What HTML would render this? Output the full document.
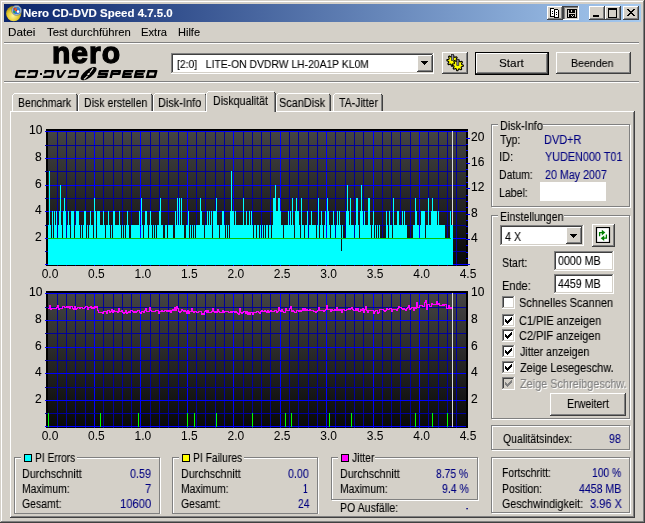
<!DOCTYPE html><html><head><meta charset="utf-8"><style>
html,body{margin:0;padding:0;}
body{width:645px;height:523px;position:relative;overflow:hidden;background:#d4d0c8;font-family:"Liberation Sans",sans-serif;font-size:11px;}
div[id^=t]{-webkit-text-stroke:0.1px currentColor;will-change:transform;}
</style></head><body>
<div style="position:absolute;left:0px;top:0px;width:645px;height:523px;background:#404040;"></div>
<div style="position:absolute;left:0px;top:0px;width:644px;height:522px;background:#d4d0c8;"></div>
<div style="position:absolute;left:1px;top:1px;width:643px;height:521px;background:#808080;"></div>
<div style="position:absolute;left:1px;top:1px;width:642px;height:520px;background:#ffffff;"></div>
<div style="position:absolute;left:2px;top:2px;width:641px;height:519px;background:#d4d0c8;"></div>
<div style="position:absolute;left:4px;top:4px;width:637px;height:18px;background:linear-gradient(to right,#0a246a,#a6caf0);"></div>
<div id="t1" style="position:absolute;left:22.96px;top:7px;line-height:13px;font-size:11px;color:#fff;font-weight:bold;white-space:nowrap;transform:scaleX(1.0423);transform-origin:0 0;">Nero CD-DVD Speed 4.7.5.0</div>
<svg style="position:absolute;left:6px;top:5px" width="16" height="17" viewBox="0 0 16 17">
<defs><radialGradient id="dg" cx="0.45" cy="0.65" r="0.65"><stop offset="0" stop-color="#fff4a0"/><stop offset="0.55" stop-color="#e6cc30"/><stop offset="1" stop-color="#9c8410"/></radialGradient></defs>
<circle cx="7.7" cy="8.6" r="7.6" fill="url(#dg)"/>
<circle cx="10.6" cy="5.4" r="4.9" fill="#b8c4d0" stroke="#707c88" stroke-width="0.8"/>
<circle cx="10.6" cy="5.4" r="3.7" fill="#2c7cd8"/>
<path d="M8 3.2 L12.5 7.5" stroke="#e02818" stroke-width="1.6"/>
<path d="M10.5 2.5 L9 6" stroke="#f07010" stroke-width="1.1"/>
<circle cx="12" cy="6.6" r="1.3" fill="#fff"/>
<circle cx="8.2" cy="7" r="1" fill="#30a030"/>
</svg>
<div style="position:absolute;left:547px;top:6px;width:16px;height:14px;background:#404040;"></div>
<div style="position:absolute;left:547px;top:6px;width:15px;height:13px;background:#ffffff;"></div>
<div style="position:absolute;left:548px;top:7px;width:14px;height:12px;background:#808080;"></div>
<div style="position:absolute;left:548px;top:7px;width:13px;height:11px;background:#d4d0c8;"></div>
<div style="position:absolute;left:563px;top:6px;width:16px;height:14px;background:#ffffff;"></div>
<div style="position:absolute;left:563px;top:6px;width:15px;height:13px;background:#404040;"></div>
<div style="position:absolute;left:564px;top:7px;width:14px;height:12px;background:#808080;"></div>
<div style="position:absolute;left:564px;top:7px;width:13px;height:11px;background:#808080;"></div>
<div style="position:absolute;left:565px;top:8px;width:13px;height:11px;background:#d4d0c8;"></div>
<div style="position:absolute;left:589px;top:6px;width:16px;height:14px;background:#404040;"></div>
<div style="position:absolute;left:589px;top:6px;width:15px;height:13px;background:#ffffff;"></div>
<div style="position:absolute;left:590px;top:7px;width:14px;height:12px;background:#808080;"></div>
<div style="position:absolute;left:590px;top:7px;width:13px;height:11px;background:#d4d0c8;"></div>
<div style="position:absolute;left:605px;top:6px;width:16px;height:14px;background:#404040;"></div>
<div style="position:absolute;left:605px;top:6px;width:15px;height:13px;background:#ffffff;"></div>
<div style="position:absolute;left:606px;top:7px;width:14px;height:12px;background:#808080;"></div>
<div style="position:absolute;left:606px;top:7px;width:13px;height:11px;background:#d4d0c8;"></div>
<div style="position:absolute;left:623px;top:6px;width:16px;height:14px;background:#404040;"></div>
<div style="position:absolute;left:623px;top:6px;width:15px;height:13px;background:#ffffff;"></div>
<div style="position:absolute;left:624px;top:7px;width:14px;height:12px;background:#808080;"></div>
<div style="position:absolute;left:624px;top:7px;width:13px;height:11px;background:#d4d0c8;"></div>
<svg style="position:absolute;left:547px;top:6px" width="16" height="14" viewBox="0 0 16 14" shape-rendering="crispEdges">
<path d="M3.5 2.5h3l1 1v7h-4z" fill="#fff" stroke="#000"/>
<path d="M7.5 3.5h3l1 1v7h-4z" fill="#fff" stroke="#000"/>
<rect x="5" y="5" width="1" height="1" fill="#000"/><rect x="5" y="7" width="1" height="1" fill="#000"/>
<rect x="9" y="6" width="1" height="1" fill="#000"/><rect x="9" y="8" width="1" height="1" fill="#000"/>
</svg>
<svg style="position:absolute;left:563px;top:6px" width="16" height="14" viewBox="0 0 16 14" shape-rendering="crispEdges">
<rect x="4" y="3" width="10" height="9" fill="#000"/>
<rect x="5" y="4" width="1" height="7" fill="#d4d0c8"/><rect x="12" y="4" width="1" height="7" fill="#d4d0c8"/>
<rect x="6" y="7" width="6" height="1" fill="#d4d0c8"/>
<rect x="8" y="4" width="1" height="2" fill="#d4d0c8"/>
<rect x="8" y="9" width="1" height="1" fill="#d4d0c8"/><rect x="9" y="10" width="1" height="1" fill="#d4d0c8"/><rect x="10" y="9" width="1" height="1" fill="#d4d0c8"/>
</svg>
<div style="position:absolute;left:593px;top:15px;width:6px;height:2px;background:#000;"></div>
<div style="position:absolute;left:608px;top:8px;width:7px;height:7px;border:1px solid #000;border-top-width:2px;"></div>
<svg style="position:absolute;left:623px;top:6px" width="16" height="14" viewBox="0 0 16 14" shape-rendering="crispEdges">
<path d="M4 3h2v1h1v1h2v-1h1v-1h2v1h-1v1h-1v1h-1v1h1v1h1v1h1v1h-2v-1h-1v-1h-2v1h-1v1h-2v-1h1v-1h1v-1h1v-1h-1v-1h-1v-1h-1z" fill="#000"/>
</svg>
<div id="t2" style="position:absolute;left:8.24px;top:26px;line-height:13px;font-size:11px;color:#000;font-weight:normal;white-space:nowrap;transform:scaleX(1.0625);transform-origin:0 0;">Datei</div>
<div id="t3" style="position:absolute;left:46.80px;top:26px;line-height:13px;font-size:11px;color:#000;font-weight:normal;white-space:nowrap;transform:scaleX(1.0235);transform-origin:0 0;">Test durchführen</div>
<div id="t4" style="position:absolute;left:140.58px;top:26px;line-height:13px;font-size:11px;color:#000;font-weight:normal;white-space:nowrap;transform:scaleX(1.0160);transform-origin:0 0;">Extra</div>
<div id="t5" style="position:absolute;left:178.00px;top:26px;line-height:13px;font-size:11px;color:#000;font-weight:normal;white-space:nowrap;transform:scaleX(1.0000);transform-origin:0 0;">Hilfe</div>
<div style="position:absolute;left:4px;top:42px;width:635px;height:1px;background:#808080;"></div>
<div style="position:absolute;left:4px;top:43px;width:635px;height:1px;background:#ffffff;"></div>
<div style="position:absolute;left:4px;top:81px;width:635px;height:1px;background:#808080;"></div>
<div style="position:absolute;left:4px;top:82px;width:635px;height:1px;background:#ffffff;"></div>
<div style="position:absolute;left:52px;top:36px;font-size:30px;line-height:33px;font-weight:bold;color:#000;-webkit-text-stroke:1.3px #000;letter-spacing:1px;">nero</div>
<svg style="position:absolute;left:0px;top:62px" width="170" height="20" viewBox="0 62 170 20">
<g fill="#000" fill-rule="evenodd">
<path transform="translate(16.5 70) skewX(-14)" d="M1.4 0H10V2.3H2.3V5.7H10V8H1.4Q0 8 0 6.6V1.4Q0 0 1.4 0Z"/><path transform="translate(28.6 70) skewX(-14)" d="M0 0H8.6Q10 0 10 1.4V6.6Q10 8 8.6 8H0V5.7H7.7V2.3H2.3V3.4H0Z"/><path transform="translate(44.8 70) skewX(-14)" d="M0 0H8.6Q10 0 10 1.4V6.6Q10 8 8.6 8H0V5.7H7.7V2.3H2.3V3.4H0Z"/><path transform="translate(56.5 70) skewX(-14)" d="M0 0H2.4L4.4 5.6H5.6L7.6 0H10L7.2 7Q6.8 8 5.8 8H4.2Q3.2 8 2.8 7Z"/><path transform="translate(69.5 70) skewX(-14)" d="M0 0H8.6Q10 0 10 1.4V6.6Q10 8 8.6 8H0V5.7H7.7V2.3H2.3V3.4H0Z"/><path transform="translate(99 70) skewX(-14)" d="M1 0H10V2.5H2.5V3H9Q10 3 10 4V7Q10 8 9 8H0V5.5H7.5V5H1Q0 5 0 4V1Q0 0 1 0Z"/><path transform="translate(111.4 70) skewX(-14)" d="M0 8V1Q0 0 1 0H9Q10 0 10 1V4Q10 5 9 5H2.5V8ZM2.5 2.5H7.5V3H2.5Z"/><path transform="translate(123.5 70) skewX(-14)" d="M1 0H10V2.5H2.5V3H9V5H2.5V5.5H10V8H1Q0 8 0 7V1Q0 0 1 0Z"/><path transform="translate(135.5 70) skewX(-14)" d="M1 0H10V2.5H2.5V3H9V5H2.5V5.5H10V8H1Q0 8 0 7V1Q0 0 1 0Z"/><path transform="translate(147.7 70) skewX(-14)" d="M0 0H9Q10 0 10 1V7Q10 8 9 8H0ZM2.5 2.5V5.5H7.5V2.5Z"/>
<rect x="40" y="73" width="2" height="2"/>
</g>
<g transform="translate(88.6 73.6) rotate(-38)"><ellipse cx="0" cy="0" rx="9.6" ry="3.9" fill="#000"/><path d="M-7.2 1.6 L-2.2 1.2 M1.6 0 L7 -1.5" stroke="#e8e4dc" stroke-width="1.1" fill="none"/><ellipse cx="-0.2" cy="0.3" rx="1.5" ry="1" fill="#e8e4dc"/></g>
</svg>
<div style="position:absolute;left:171px;top:53px;width:263px;height:21px;background:#ffffff;"></div>
<div style="position:absolute;left:171px;top:53px;width:262px;height:20px;background:#808080;"></div>
<div style="position:absolute;left:172px;top:54px;width:261px;height:19px;background:#d4d0c8;"></div>
<div style="position:absolute;left:172px;top:54px;width:260px;height:18px;background:#404040;"></div>
<div style="position:absolute;left:173px;top:55px;width:259px;height:17px;background:#fff;"></div>
<div style="position:absolute;left:417px;top:55px;width:16px;height:17px;background:#404040;"></div>
<div style="position:absolute;left:417px;top:55px;width:15px;height:16px;background:#ffffff;"></div>
<div style="position:absolute;left:418px;top:56px;width:14px;height:15px;background:#808080;"></div>
<div style="position:absolute;left:418px;top:56px;width:13px;height:14px;background:#d4d0c8;"></div>
<svg style="position:absolute;left:421px;top:61px" width="7" height="4" shape-rendering="crispEdges"><path d="M0 0h7v1h-1v1h-1v1h-1v1h-1v-1h-1v-1h-1v-1h-1z" fill="#000"/></svg>
<div id="t6" style="position:absolute;left:176.56px;top:58px;line-height:13px;font-size:11px;color:#000;font-weight:normal;white-space:nowrap;transform:scaleX(0.9416);transform-origin:0 0;">[2:0]&nbsp;&nbsp;&nbsp;LITE-ON DVDRW LH-20A1P KL0M</div>
<div style="position:absolute;left:442px;top:52px;width:26px;height:22px;background:#404040;"></div>
<div style="position:absolute;left:442px;top:52px;width:25px;height:21px;background:#ffffff;"></div>
<div style="position:absolute;left:443px;top:53px;width:24px;height:20px;background:#808080;"></div>
<div style="position:absolute;left:443px;top:53px;width:23px;height:19px;background:#d4d0c8;"></div>
<svg style="position:absolute;left:444px;top:52px" width="22" height="20" viewBox="0 0 22 20"><g fill="#ffff00" stroke="#000" stroke-width="1.1" stroke-linejoin="round"><polygon points="14.10,8.70 13.99,9.79 12.20,10.23 11.83,10.92 12.46,12.66 11.61,13.36 10.03,12.40 9.28,12.62 8.50,14.30 7.41,14.19 6.97,12.40 6.28,12.03 4.54,12.66 3.84,11.81 4.80,10.23 4.58,9.48 2.90,8.70 3.01,7.61 4.80,7.17 5.17,6.48 4.54,4.74 5.39,4.04 6.97,5.00 7.72,4.78 8.50,3.10 9.59,3.21 10.03,5.00 10.72,5.37 12.46,4.74 13.16,5.59 12.20,7.17 12.42,7.92"/><polygon points="19.40,13.20 19.29,14.29 17.50,14.73 17.13,15.42 17.76,17.16 16.91,17.86 15.33,16.90 14.58,17.12 13.80,18.80 12.71,18.69 12.27,16.90 11.58,16.53 9.84,17.16 9.14,16.31 10.10,14.73 9.88,13.98 8.20,13.20 8.31,12.11 10.10,11.67 10.47,10.98 9.84,9.24 10.69,8.54 12.27,9.50 13.02,9.28 13.80,7.60 14.89,7.71 15.33,9.50 16.02,9.87 17.76,9.24 18.46,10.09 17.50,11.67 17.72,12.42"/></g><rect x="7.5" y="2.5" width="2" height="6" fill="#9090a8" stroke="#202020" stroke-width="0.7"/><rect x="12.8" y="7.3" width="2" height="6" fill="#9090a8" stroke="#202020" stroke-width="0.7"/></svg>
<div style="position:absolute;left:475px;top:52px;width:74px;height:23px;background:#000;"></div>
<div style="position:absolute;left:476px;top:53px;width:72px;height:21px;background:#404040;"></div>
<div style="position:absolute;left:476px;top:53px;width:71px;height:20px;background:#ffffff;"></div>
<div style="position:absolute;left:477px;top:54px;width:70px;height:19px;background:#808080;"></div>
<div style="position:absolute;left:477px;top:54px;width:69px;height:18px;background:#d4d0c8;"></div>
<div id="t7" style="position:absolute;left:498.73px;top:57px;line-height:13px;font-size:11px;color:#000;font-weight:normal;white-space:nowrap;transform:scaleX(1.0682);transform-origin:0 0;">Start</div>
<div style="position:absolute;left:556px;top:52px;width:75px;height:22px;background:#404040;"></div>
<div style="position:absolute;left:556px;top:52px;width:74px;height:21px;background:#ffffff;"></div>
<div style="position:absolute;left:557px;top:53px;width:73px;height:20px;background:#808080;"></div>
<div style="position:absolute;left:557px;top:53px;width:72px;height:19px;background:#d4d0c8;"></div>
<div id="t8" style="position:absolute;left:570.64px;top:57px;line-height:13px;font-size:11px;color:#000;font-weight:normal;white-space:nowrap;transform:scaleX(0.9628);transform-origin:0 0;">Beenden</div>
<div style="position:absolute;left:10px;top:111px;width:625px;height:407px;background:#404040;"></div>
<div style="position:absolute;left:10px;top:111px;width:624px;height:406px;background:#ffffff;"></div>
<div style="position:absolute;left:11px;top:112px;width:623px;height:405px;background:#808080;"></div>
<div style="position:absolute;left:11px;top:112px;width:622px;height:404px;background:#d4d0c8;"></div>
<div style="position:absolute;left:12px;top:95px;width:1px;height:16px;background:#ffffff;"></div>
<div style="position:absolute;left:13px;top:94px;width:1px;height:1px;background:#ffffff;"></div>
<div style="position:absolute;left:14px;top:93px;width:62px;height:1px;background:#ffffff;"></div>
<div style="position:absolute;left:76px;top:94px;width:1px;height:17px;background:#808080;"></div>
<div style="position:absolute;left:77px;top:95px;width:1px;height:16px;background:#404040;"></div>
<div style="position:absolute;left:76px;top:94px;width:1px;height:1px;background:#404040;"></div>
<div id="t9" style="position:absolute;left:18.13px;top:97px;line-height:13px;font-size:12px;color:#000;font-weight:normal;white-space:nowrap;transform:scaleX(0.8733);transform-origin:0 0;">Benchmark</div>
<div style="position:absolute;left:78px;top:95px;width:1px;height:16px;background:#ffffff;"></div>
<div style="position:absolute;left:79px;top:94px;width:1px;height:1px;background:#ffffff;"></div>
<div style="position:absolute;left:80px;top:93px;width:71px;height:1px;background:#ffffff;"></div>
<div style="position:absolute;left:151px;top:94px;width:1px;height:17px;background:#808080;"></div>
<div style="position:absolute;left:152px;top:95px;width:1px;height:16px;background:#404040;"></div>
<div style="position:absolute;left:151px;top:94px;width:1px;height:1px;background:#404040;"></div>
<div id="t10" style="position:absolute;left:84.12px;top:97px;line-height:13px;font-size:12px;color:#000;font-weight:normal;white-space:nowrap;transform:scaleX(0.8800);transform-origin:0 0;">Disk erstellen</div>
<div style="position:absolute;left:153px;top:95px;width:1px;height:16px;background:#ffffff;"></div>
<div style="position:absolute;left:154px;top:94px;width:1px;height:1px;background:#ffffff;"></div>
<div style="position:absolute;left:155px;top:93px;width:50px;height:1px;background:#ffffff;"></div>
<div style="position:absolute;left:205px;top:94px;width:1px;height:17px;background:#808080;"></div>
<div style="position:absolute;left:206px;top:95px;width:1px;height:16px;background:#404040;"></div>
<div style="position:absolute;left:205px;top:94px;width:1px;height:1px;background:#404040;"></div>
<div id="t11" style="position:absolute;left:158.09px;top:97px;line-height:13px;font-size:12px;color:#000;font-weight:normal;white-space:nowrap;transform:scaleX(0.9130);transform-origin:0 0;">Disk-Info</div>
<div style="position:absolute;left:276px;top:95px;width:1px;height:16px;background:#ffffff;"></div>
<div style="position:absolute;left:277px;top:94px;width:1px;height:1px;background:#ffffff;"></div>
<div style="position:absolute;left:278px;top:93px;width:51px;height:1px;background:#ffffff;"></div>
<div style="position:absolute;left:329px;top:94px;width:1px;height:17px;background:#808080;"></div>
<div style="position:absolute;left:330px;top:95px;width:1px;height:16px;background:#404040;"></div>
<div style="position:absolute;left:329px;top:94px;width:1px;height:1px;background:#404040;"></div>
<div id="t12" style="position:absolute;left:279.09px;top:97px;line-height:13px;font-size:12px;color:#000;font-weight:normal;white-space:nowrap;transform:scaleX(0.9080);transform-origin:0 0;">ScanDisk</div>
<div style="position:absolute;left:333px;top:95px;width:1px;height:16px;background:#ffffff;"></div>
<div style="position:absolute;left:334px;top:94px;width:1px;height:1px;background:#ffffff;"></div>
<div style="position:absolute;left:335px;top:93px;width:46px;height:1px;background:#ffffff;"></div>
<div style="position:absolute;left:381px;top:94px;width:1px;height:17px;background:#808080;"></div>
<div style="position:absolute;left:382px;top:95px;width:1px;height:16px;background:#404040;"></div>
<div style="position:absolute;left:381px;top:94px;width:1px;height:1px;background:#404040;"></div>
<div id="t13" style="position:absolute;left:338.50px;top:97px;line-height:13px;font-size:12px;color:#000;font-weight:normal;white-space:nowrap;transform:scaleX(0.8750);transform-origin:0 0;">TA-Jitter</div>
<div style="position:absolute;left:206px;top:93px;width:1px;height:19px;background:#ffffff;"></div>
<div style="position:absolute;left:207px;top:92px;width:1px;height:1px;background:#ffffff;"></div>
<div style="position:absolute;left:208px;top:91px;width:66px;height:1px;background:#ffffff;"></div>
<div style="position:absolute;left:207px;top:93px;width:67px;height:20px;background:#d4d0c8;"></div>
<div style="position:absolute;left:274px;top:92px;width:1px;height:20px;background:#808080;"></div>
<div style="position:absolute;left:275px;top:93px;width:1px;height:19px;background:#404040;"></div>
<div style="position:absolute;left:274px;top:92px;width:1px;height:1px;background:#404040;"></div>
<div style="position:absolute;left:207px;top:111px;width:67px;height:1px;background:#d4d0c8;"></div>
<div id="t14" style="position:absolute;left:213.11px;top:95px;line-height:13px;font-size:12px;color:#000;font-weight:normal;white-space:nowrap;transform:scaleX(0.8852);transform-origin:0 0;">Diskqualität</div>
<svg style="position:absolute;left:0;top:0" width="645" height="523" shape-rendering="crispEdges">
<defs><linearGradient id="g131" x1="0" y1="0" x2="0" y2="1"><stop offset="0" stop-color="#444444"/><stop offset="1" stop-color="#080808"/></linearGradient></defs>
<rect x="46" y="129" width="422" height="137" fill="#000"/>
<rect x="48" y="131" width="418" height="134" fill="url(#g131)"/>
<rect x="57" y="131" width="1" height="135" fill="#00009c"/>
<rect x="66" y="131" width="1" height="135" fill="#00009c"/>
<rect x="75" y="131" width="1" height="135" fill="#00009c"/>
<rect x="85" y="131" width="1" height="135" fill="#00009c"/>
<rect x="94" y="131" width="1" height="135" fill="#0000ff"/>
<rect x="103" y="131" width="1" height="135" fill="#00009c"/>
<rect x="113" y="131" width="1" height="135" fill="#00009c"/>
<rect x="122" y="131" width="1" height="135" fill="#00009c"/>
<rect x="131" y="131" width="1" height="135" fill="#00009c"/>
<rect x="140" y="131" width="1" height="135" fill="#0000ff"/>
<rect x="150" y="131" width="1" height="135" fill="#00009c"/>
<rect x="159" y="131" width="1" height="135" fill="#00009c"/>
<rect x="168" y="131" width="1" height="135" fill="#00009c"/>
<rect x="178" y="131" width="1" height="135" fill="#00009c"/>
<rect x="187" y="131" width="1" height="135" fill="#0000ff"/>
<rect x="196" y="131" width="1" height="135" fill="#00009c"/>
<rect x="205" y="131" width="1" height="135" fill="#00009c"/>
<rect x="215" y="131" width="1" height="135" fill="#00009c"/>
<rect x="224" y="131" width="1" height="135" fill="#00009c"/>
<rect x="233" y="131" width="1" height="135" fill="#0000ff"/>
<rect x="243" y="131" width="1" height="135" fill="#00009c"/>
<rect x="252" y="131" width="1" height="135" fill="#00009c"/>
<rect x="261" y="131" width="1" height="135" fill="#00009c"/>
<rect x="270" y="131" width="1" height="135" fill="#00009c"/>
<rect x="280" y="131" width="1" height="135" fill="#0000ff"/>
<rect x="289" y="131" width="1" height="135" fill="#00009c"/>
<rect x="298" y="131" width="1" height="135" fill="#00009c"/>
<rect x="308" y="131" width="1" height="135" fill="#00009c"/>
<rect x="317" y="131" width="1" height="135" fill="#00009c"/>
<rect x="326" y="131" width="1" height="135" fill="#0000ff"/>
<rect x="335" y="131" width="1" height="135" fill="#00009c"/>
<rect x="345" y="131" width="1" height="135" fill="#00009c"/>
<rect x="354" y="131" width="1" height="135" fill="#00009c"/>
<rect x="363" y="131" width="1" height="135" fill="#00009c"/>
<rect x="373" y="131" width="1" height="135" fill="#0000ff"/>
<rect x="382" y="131" width="1" height="135" fill="#00009c"/>
<rect x="391" y="131" width="1" height="135" fill="#00009c"/>
<rect x="400" y="131" width="1" height="135" fill="#00009c"/>
<rect x="410" y="131" width="1" height="135" fill="#00009c"/>
<rect x="419" y="131" width="1" height="135" fill="#0000ff"/>
<rect x="428" y="131" width="1" height="135" fill="#00009c"/>
<rect x="438" y="131" width="1" height="135" fill="#00009c"/>
<rect x="447" y="131" width="1" height="135" fill="#00009c"/>
<rect x="456" y="131" width="1" height="135" fill="#00009c"/>
<rect x="45" y="264" width="425" height="1" fill="#0000ff"/>
<rect x="45" y="251" width="421" height="1" fill="#00009c"/>
<rect x="45" y="238" width="421" height="1" fill="#0000ff"/>
<rect x="45" y="225" width="421" height="1" fill="#00009c"/>
<rect x="45" y="211" width="421" height="1" fill="#0000ff"/>
<rect x="45" y="198" width="421" height="1" fill="#00009c"/>
<rect x="45" y="185" width="421" height="1" fill="#0000ff"/>
<rect x="45" y="171" width="421" height="1" fill="#00009c"/>
<rect x="45" y="158" width="421" height="1" fill="#0000ff"/>
<rect x="45" y="145" width="421" height="1" fill="#00009c"/>
<rect x="45" y="131" width="421" height="1" fill="#0000ff"/>
<rect x="452" y="131" width="1" height="134" fill="#d8d8d8"/>
<rect x="48" y="225" width="1" height="40" fill="#00ffff"/>
<rect x="49" y="171" width="1" height="94" fill="#00ffff"/>
<rect x="50" y="225" width="1" height="40" fill="#00ffff"/>
<rect x="51" y="239" width="1" height="26" fill="#00ffff"/>
<rect x="52" y="211" width="1" height="54" fill="#00ffff"/>
<rect x="53" y="239" width="1" height="26" fill="#00ffff"/>
<rect x="54" y="211" width="1" height="54" fill="#00ffff"/>
<rect x="55" y="225" width="1" height="40" fill="#00ffff"/>
<rect x="56" y="211" width="1" height="54" fill="#00ffff"/>
<rect x="57" y="239" width="1" height="26" fill="#00ffff"/>
<rect x="58" y="225" width="1" height="40" fill="#00ffff"/>
<rect x="59" y="211" width="1" height="54" fill="#00ffff"/>
<rect x="60" y="185" width="1" height="80" fill="#00ffff"/>
<rect x="61" y="225" width="1" height="40" fill="#00ffff"/>
<rect x="62" y="239" width="1" height="26" fill="#00ffff"/>
<rect x="63" y="211" width="1" height="54" fill="#00ffff"/>
<rect x="64" y="198" width="1" height="67" fill="#00ffff"/>
<rect x="65" y="211" width="1" height="54" fill="#00ffff"/>
<rect x="66" y="239" width="1" height="26" fill="#00ffff"/>
<rect x="67" y="225" width="1" height="40" fill="#00ffff"/>
<rect x="68" y="211" width="1" height="54" fill="#00ffff"/>
<rect x="69" y="225" width="1" height="40" fill="#00ffff"/>
<rect x="70" y="239" width="1" height="26" fill="#00ffff"/>
<rect x="71" y="211" width="3" height="54" fill="#00ffff"/>
<rect x="74" y="239" width="1" height="26" fill="#00ffff"/>
<rect x="75" y="225" width="1" height="40" fill="#00ffff"/>
<rect x="76" y="211" width="3" height="54" fill="#00ffff"/>
<rect x="79" y="225" width="1" height="40" fill="#00ffff"/>
<rect x="80" y="239" width="1" height="26" fill="#00ffff"/>
<rect x="81" y="225" width="1" height="40" fill="#00ffff"/>
<rect x="82" y="239" width="1" height="26" fill="#00ffff"/>
<rect x="83" y="225" width="1" height="40" fill="#00ffff"/>
<rect x="84" y="211" width="2" height="54" fill="#00ffff"/>
<rect x="86" y="239" width="1" height="26" fill="#00ffff"/>
<rect x="87" y="225" width="1" height="40" fill="#00ffff"/>
<rect x="88" y="239" width="1" height="26" fill="#00ffff"/>
<rect x="89" y="225" width="1" height="40" fill="#00ffff"/>
<rect x="90" y="211" width="1" height="54" fill="#00ffff"/>
<rect x="91" y="225" width="2" height="40" fill="#00ffff"/>
<rect x="93" y="239" width="1" height="26" fill="#00ffff"/>
<rect x="94" y="198" width="1" height="67" fill="#00ffff"/>
<rect x="95" y="211" width="1" height="54" fill="#00ffff"/>
<rect x="96" y="239" width="1" height="26" fill="#00ffff"/>
<rect x="97" y="211" width="3" height="54" fill="#00ffff"/>
<rect x="100" y="225" width="3" height="40" fill="#00ffff"/>
<rect x="103" y="211" width="1" height="54" fill="#00ffff"/>
<rect x="104" y="225" width="1" height="40" fill="#00ffff"/>
<rect x="105" y="239" width="1" height="26" fill="#00ffff"/>
<rect x="106" y="225" width="2" height="40" fill="#00ffff"/>
<rect x="108" y="211" width="1" height="54" fill="#00ffff"/>
<rect x="109" y="225" width="1" height="40" fill="#00ffff"/>
<rect x="110" y="239" width="1" height="26" fill="#00ffff"/>
<rect x="111" y="225" width="1" height="40" fill="#00ffff"/>
<rect x="112" y="239" width="1" height="26" fill="#00ffff"/>
<rect x="113" y="211" width="2" height="54" fill="#00ffff"/>
<rect x="115" y="225" width="4" height="40" fill="#00ffff"/>
<rect x="119" y="211" width="1" height="54" fill="#00ffff"/>
<rect x="120" y="225" width="1" height="40" fill="#00ffff"/>
<rect x="121" y="239" width="1" height="26" fill="#00ffff"/>
<rect x="122" y="225" width="1" height="40" fill="#00ffff"/>
<rect x="123" y="239" width="1" height="26" fill="#00ffff"/>
<rect x="124" y="225" width="1" height="40" fill="#00ffff"/>
<rect x="125" y="239" width="1" height="26" fill="#00ffff"/>
<rect x="126" y="225" width="1" height="40" fill="#00ffff"/>
<rect x="127" y="211" width="1" height="54" fill="#00ffff"/>
<rect x="128" y="225" width="1" height="40" fill="#00ffff"/>
<rect x="129" y="239" width="2" height="26" fill="#00ffff"/>
<rect x="131" y="225" width="8" height="40" fill="#00ffff"/>
<rect x="139" y="211" width="1" height="54" fill="#00ffff"/>
<rect x="140" y="239" width="1" height="26" fill="#00ffff"/>
<rect x="141" y="198" width="1" height="67" fill="#00ffff"/>
<rect x="142" y="225" width="1" height="40" fill="#00ffff"/>
<rect x="143" y="239" width="1" height="26" fill="#00ffff"/>
<rect x="144" y="225" width="1" height="40" fill="#00ffff"/>
<rect x="145" y="211" width="2" height="54" fill="#00ffff"/>
<rect x="147" y="225" width="1" height="40" fill="#00ffff"/>
<rect x="148" y="239" width="1" height="26" fill="#00ffff"/>
<rect x="149" y="225" width="1" height="40" fill="#00ffff"/>
<rect x="150" y="211" width="1" height="54" fill="#00ffff"/>
<rect x="151" y="225" width="1" height="40" fill="#00ffff"/>
<rect x="152" y="239" width="1" height="26" fill="#00ffff"/>
<rect x="153" y="225" width="1" height="40" fill="#00ffff"/>
<rect x="154" y="239" width="1" height="26" fill="#00ffff"/>
<rect x="155" y="225" width="1" height="40" fill="#00ffff"/>
<rect x="156" y="239" width="1" height="26" fill="#00ffff"/>
<rect x="157" y="225" width="2" height="40" fill="#00ffff"/>
<rect x="159" y="211" width="1" height="54" fill="#00ffff"/>
<rect x="160" y="198" width="1" height="67" fill="#00ffff"/>
<rect x="161" y="225" width="2" height="40" fill="#00ffff"/>
<rect x="163" y="239" width="2" height="26" fill="#00ffff"/>
<rect x="165" y="225" width="2" height="40" fill="#00ffff"/>
<rect x="167" y="239" width="1" height="26" fill="#00ffff"/>
<rect x="168" y="225" width="5" height="40" fill="#00ffff"/>
<rect x="173" y="239" width="2" height="26" fill="#00ffff"/>
<rect x="175" y="211" width="1" height="54" fill="#00ffff"/>
<rect x="176" y="225" width="1" height="40" fill="#00ffff"/>
<rect x="177" y="198" width="1" height="67" fill="#00ffff"/>
<rect x="178" y="225" width="1" height="40" fill="#00ffff"/>
<rect x="179" y="198" width="1" height="67" fill="#00ffff"/>
<rect x="180" y="225" width="1" height="40" fill="#00ffff"/>
<rect x="181" y="198" width="1" height="67" fill="#00ffff"/>
<rect x="182" y="225" width="2" height="40" fill="#00ffff"/>
<rect x="184" y="239" width="2" height="26" fill="#00ffff"/>
<rect x="186" y="225" width="2" height="40" fill="#00ffff"/>
<rect x="188" y="211" width="1" height="54" fill="#00ffff"/>
<rect x="189" y="239" width="1" height="26" fill="#00ffff"/>
<rect x="190" y="225" width="1" height="40" fill="#00ffff"/>
<rect x="191" y="239" width="1" height="26" fill="#00ffff"/>
<rect x="192" y="225" width="1" height="40" fill="#00ffff"/>
<rect x="193" y="239" width="1" height="26" fill="#00ffff"/>
<rect x="194" y="225" width="1" height="40" fill="#00ffff"/>
<rect x="195" y="239" width="1" height="26" fill="#00ffff"/>
<rect x="196" y="225" width="4" height="40" fill="#00ffff"/>
<rect x="200" y="198" width="1" height="67" fill="#00ffff"/>
<rect x="201" y="211" width="1" height="54" fill="#00ffff"/>
<rect x="202" y="225" width="2" height="40" fill="#00ffff"/>
<rect x="204" y="239" width="1" height="26" fill="#00ffff"/>
<rect x="205" y="225" width="2" height="40" fill="#00ffff"/>
<rect x="207" y="211" width="1" height="54" fill="#00ffff"/>
<rect x="208" y="225" width="1" height="40" fill="#00ffff"/>
<rect x="209" y="211" width="1" height="54" fill="#00ffff"/>
<rect x="210" y="225" width="1" height="40" fill="#00ffff"/>
<rect x="211" y="211" width="1" height="54" fill="#00ffff"/>
<rect x="212" y="239" width="1" height="26" fill="#00ffff"/>
<rect x="213" y="211" width="3" height="54" fill="#00ffff"/>
<rect x="216" y="198" width="1" height="67" fill="#00ffff"/>
<rect x="217" y="225" width="2" height="40" fill="#00ffff"/>
<rect x="219" y="239" width="1" height="26" fill="#00ffff"/>
<rect x="220" y="225" width="2" height="40" fill="#00ffff"/>
<rect x="222" y="211" width="2" height="54" fill="#00ffff"/>
<rect x="224" y="225" width="1" height="40" fill="#00ffff"/>
<rect x="225" y="239" width="1" height="26" fill="#00ffff"/>
<rect x="226" y="225" width="1" height="40" fill="#00ffff"/>
<rect x="227" y="239" width="1" height="26" fill="#00ffff"/>
<rect x="228" y="225" width="1" height="40" fill="#00ffff"/>
<rect x="229" y="239" width="1" height="26" fill="#00ffff"/>
<rect x="230" y="211" width="1" height="54" fill="#00ffff"/>
<rect x="231" y="171" width="1" height="94" fill="#00ffff"/>
<rect x="232" y="211" width="2" height="54" fill="#00ffff"/>
<rect x="234" y="225" width="1" height="40" fill="#00ffff"/>
<rect x="235" y="211" width="1" height="54" fill="#00ffff"/>
<rect x="236" y="225" width="7" height="40" fill="#00ffff"/>
<rect x="243" y="198" width="1" height="67" fill="#00ffff"/>
<rect x="244" y="225" width="2" height="40" fill="#00ffff"/>
<rect x="246" y="211" width="1" height="54" fill="#00ffff"/>
<rect x="247" y="225" width="2" height="40" fill="#00ffff"/>
<rect x="249" y="211" width="1" height="54" fill="#00ffff"/>
<rect x="250" y="225" width="1" height="40" fill="#00ffff"/>
<rect x="251" y="211" width="1" height="54" fill="#00ffff"/>
<rect x="252" y="225" width="1" height="40" fill="#00ffff"/>
<rect x="253" y="239" width="1" height="26" fill="#00ffff"/>
<rect x="254" y="225" width="2" height="40" fill="#00ffff"/>
<rect x="256" y="239" width="1" height="26" fill="#00ffff"/>
<rect x="257" y="225" width="2" height="40" fill="#00ffff"/>
<rect x="259" y="239" width="1" height="26" fill="#00ffff"/>
<rect x="260" y="225" width="1" height="40" fill="#00ffff"/>
<rect x="261" y="239" width="1" height="26" fill="#00ffff"/>
<rect x="262" y="225" width="1" height="40" fill="#00ffff"/>
<rect x="263" y="239" width="1" height="26" fill="#00ffff"/>
<rect x="264" y="225" width="1" height="40" fill="#00ffff"/>
<rect x="265" y="239" width="1" height="26" fill="#00ffff"/>
<rect x="266" y="225" width="2" height="40" fill="#00ffff"/>
<rect x="268" y="239" width="1" height="26" fill="#00ffff"/>
<rect x="269" y="225" width="2" height="40" fill="#00ffff"/>
<rect x="271" y="239" width="1" height="26" fill="#00ffff"/>
<rect x="272" y="225" width="1" height="40" fill="#00ffff"/>
<rect x="273" y="198" width="2" height="67" fill="#00ffff"/>
<rect x="275" y="185" width="1" height="80" fill="#00ffff"/>
<rect x="276" y="211" width="2" height="54" fill="#00ffff"/>
<rect x="278" y="198" width="2" height="67" fill="#00ffff"/>
<rect x="280" y="211" width="1" height="54" fill="#00ffff"/>
<rect x="281" y="225" width="2" height="40" fill="#00ffff"/>
<rect x="283" y="239" width="1" height="26" fill="#00ffff"/>
<rect x="284" y="225" width="4" height="40" fill="#00ffff"/>
<rect x="288" y="211" width="1" height="54" fill="#00ffff"/>
<rect x="289" y="225" width="1" height="40" fill="#00ffff"/>
<rect x="290" y="211" width="1" height="54" fill="#00ffff"/>
<rect x="291" y="225" width="1" height="40" fill="#00ffff"/>
<rect x="292" y="198" width="1" height="67" fill="#00ffff"/>
<rect x="293" y="225" width="1" height="40" fill="#00ffff"/>
<rect x="294" y="239" width="1" height="26" fill="#00ffff"/>
<rect x="295" y="211" width="1" height="54" fill="#00ffff"/>
<rect x="296" y="198" width="1" height="67" fill="#00ffff"/>
<rect x="297" y="211" width="2" height="54" fill="#00ffff"/>
<rect x="299" y="225" width="1" height="40" fill="#00ffff"/>
<rect x="300" y="239" width="1" height="26" fill="#00ffff"/>
<rect x="301" y="198" width="1" height="67" fill="#00ffff"/>
<rect x="302" y="225" width="2" height="40" fill="#00ffff"/>
<rect x="304" y="239" width="1" height="26" fill="#00ffff"/>
<rect x="305" y="225" width="2" height="40" fill="#00ffff"/>
<rect x="307" y="211" width="1" height="54" fill="#00ffff"/>
<rect x="308" y="239" width="1" height="26" fill="#00ffff"/>
<rect x="309" y="225" width="2" height="40" fill="#00ffff"/>
<rect x="311" y="211" width="1" height="54" fill="#00ffff"/>
<rect x="312" y="225" width="4" height="40" fill="#00ffff"/>
<rect x="316" y="239" width="1" height="26" fill="#00ffff"/>
<rect x="317" y="225" width="1" height="40" fill="#00ffff"/>
<rect x="318" y="198" width="1" height="67" fill="#00ffff"/>
<rect x="319" y="239" width="1" height="26" fill="#00ffff"/>
<rect x="320" y="225" width="1" height="40" fill="#00ffff"/>
<rect x="321" y="211" width="1" height="54" fill="#00ffff"/>
<rect x="322" y="225" width="1" height="40" fill="#00ffff"/>
<rect x="323" y="239" width="1" height="26" fill="#00ffff"/>
<rect x="324" y="225" width="1" height="40" fill="#00ffff"/>
<rect x="325" y="211" width="1" height="54" fill="#00ffff"/>
<rect x="326" y="239" width="1" height="26" fill="#00ffff"/>
<rect x="327" y="198" width="1" height="67" fill="#00ffff"/>
<rect x="328" y="211" width="1" height="54" fill="#00ffff"/>
<rect x="329" y="225" width="1" height="40" fill="#00ffff"/>
<rect x="330" y="239" width="1" height="26" fill="#00ffff"/>
<rect x="331" y="225" width="2" height="40" fill="#00ffff"/>
<rect x="333" y="211" width="1" height="54" fill="#00ffff"/>
<rect x="334" y="225" width="1" height="40" fill="#00ffff"/>
<rect x="335" y="239" width="1" height="26" fill="#00ffff"/>
<rect x="336" y="225" width="1" height="40" fill="#00ffff"/>
<rect x="337" y="211" width="1" height="54" fill="#00ffff"/>
<rect x="338" y="225" width="1" height="40" fill="#00ffff"/>
<rect x="339" y="211" width="1" height="54" fill="#00ffff"/>
<rect x="340" y="225" width="1" height="40" fill="#00ffff"/>
<rect x="341" y="251" width="1" height="14" fill="#00ffff"/>
<rect x="342" y="225" width="1" height="40" fill="#00ffff"/>
<rect x="343" y="239" width="3" height="26" fill="#00ffff"/>
<rect x="346" y="211" width="1" height="54" fill="#00ffff"/>
<rect x="347" y="185" width="1" height="80" fill="#00ffff"/>
<rect x="348" y="211" width="1" height="54" fill="#00ffff"/>
<rect x="349" y="225" width="1" height="40" fill="#00ffff"/>
<rect x="350" y="198" width="1" height="67" fill="#00ffff"/>
<rect x="351" y="225" width="3" height="40" fill="#00ffff"/>
<rect x="354" y="239" width="1" height="26" fill="#00ffff"/>
<rect x="355" y="225" width="1" height="40" fill="#00ffff"/>
<rect x="356" y="198" width="2" height="67" fill="#00ffff"/>
<rect x="358" y="225" width="1" height="40" fill="#00ffff"/>
<rect x="359" y="239" width="1" height="26" fill="#00ffff"/>
<rect x="360" y="211" width="1" height="54" fill="#00ffff"/>
<rect x="361" y="185" width="1" height="80" fill="#00ffff"/>
<rect x="362" y="211" width="1" height="54" fill="#00ffff"/>
<rect x="363" y="225" width="1" height="40" fill="#00ffff"/>
<rect x="364" y="211" width="1" height="54" fill="#00ffff"/>
<rect x="365" y="225" width="3" height="40" fill="#00ffff"/>
<rect x="368" y="198" width="2" height="67" fill="#00ffff"/>
<rect x="370" y="225" width="1" height="40" fill="#00ffff"/>
<rect x="371" y="239" width="1" height="26" fill="#00ffff"/>
<rect x="372" y="225" width="1" height="40" fill="#00ffff"/>
<rect x="373" y="211" width="1" height="54" fill="#00ffff"/>
<rect x="374" y="239" width="1" height="26" fill="#00ffff"/>
<rect x="375" y="225" width="1" height="40" fill="#00ffff"/>
<rect x="376" y="239" width="1" height="26" fill="#00ffff"/>
<rect x="377" y="225" width="1" height="40" fill="#00ffff"/>
<rect x="378" y="239" width="1" height="26" fill="#00ffff"/>
<rect x="379" y="225" width="1" height="40" fill="#00ffff"/>
<rect x="380" y="239" width="6" height="26" fill="#00ffff"/>
<rect x="386" y="211" width="1" height="54" fill="#00ffff"/>
<rect x="387" y="225" width="1" height="40" fill="#00ffff"/>
<rect x="388" y="239" width="1" height="26" fill="#00ffff"/>
<rect x="389" y="211" width="1" height="54" fill="#00ffff"/>
<rect x="390" y="225" width="2" height="40" fill="#00ffff"/>
<rect x="392" y="239" width="1" height="26" fill="#00ffff"/>
<rect x="393" y="198" width="1" height="67" fill="#00ffff"/>
<rect x="394" y="225" width="3" height="40" fill="#00ffff"/>
<rect x="397" y="211" width="2" height="54" fill="#00ffff"/>
<rect x="399" y="225" width="3" height="40" fill="#00ffff"/>
<rect x="402" y="211" width="1" height="54" fill="#00ffff"/>
<rect x="403" y="225" width="1" height="40" fill="#00ffff"/>
<rect x="404" y="211" width="1" height="54" fill="#00ffff"/>
<rect x="405" y="225" width="2" height="40" fill="#00ffff"/>
<rect x="407" y="239" width="6" height="26" fill="#00ffff"/>
<rect x="413" y="225" width="2" height="40" fill="#00ffff"/>
<rect x="415" y="198" width="1" height="67" fill="#00ffff"/>
<rect x="416" y="211" width="1" height="54" fill="#00ffff"/>
<rect x="417" y="225" width="2" height="40" fill="#00ffff"/>
<rect x="419" y="239" width="1" height="26" fill="#00ffff"/>
<rect x="420" y="225" width="1" height="40" fill="#00ffff"/>
<rect x="421" y="211" width="4" height="54" fill="#00ffff"/>
<rect x="425" y="239" width="1" height="26" fill="#00ffff"/>
<rect x="426" y="225" width="2" height="40" fill="#00ffff"/>
<rect x="428" y="198" width="1" height="67" fill="#00ffff"/>
<rect x="429" y="225" width="2" height="40" fill="#00ffff"/>
<rect x="431" y="211" width="1" height="54" fill="#00ffff"/>
<rect x="432" y="198" width="1" height="67" fill="#00ffff"/>
<rect x="433" y="211" width="4" height="54" fill="#00ffff"/>
<rect x="437" y="225" width="1" height="40" fill="#00ffff"/>
<rect x="438" y="211" width="1" height="54" fill="#00ffff"/>
<rect x="439" y="225" width="6" height="40" fill="#00ffff"/>
<rect x="445" y="239" width="5" height="26" fill="#00ffff"/>
<rect x="450" y="211" width="1" height="54" fill="#00ffff"/>
<rect x="451" y="225" width="2" height="40" fill="#00ffff"/>
<rect x="48" y="238" width="403" height="1" fill="#00c800"/>
<rect x="466" y="264" width="4" height="1" fill="#0000ff"/>
<rect x="466" y="258" width="2" height="1" fill="#0000ff"/>
<rect x="466" y="252" width="2" height="1" fill="#0000ff"/>
<rect x="466" y="245" width="2" height="1" fill="#0000ff"/>
<rect x="466" y="239" width="4" height="1" fill="#0000ff"/>
<rect x="466" y="233" width="2" height="1" fill="#0000ff"/>
<rect x="466" y="226" width="2" height="1" fill="#0000ff"/>
<rect x="466" y="220" width="2" height="1" fill="#0000ff"/>
<rect x="466" y="214" width="4" height="1" fill="#0000ff"/>
<rect x="466" y="207" width="2" height="1" fill="#0000ff"/>
<rect x="466" y="201" width="2" height="1" fill="#0000ff"/>
<rect x="466" y="195" width="2" height="1" fill="#0000ff"/>
<rect x="466" y="188" width="4" height="1" fill="#0000ff"/>
<rect x="466" y="182" width="2" height="1" fill="#0000ff"/>
<rect x="466" y="176" width="2" height="1" fill="#0000ff"/>
<rect x="466" y="169" width="2" height="1" fill="#0000ff"/>
<rect x="466" y="163" width="4" height="1" fill="#0000ff"/>
<rect x="466" y="157" width="2" height="1" fill="#0000ff"/>
<rect x="466" y="150" width="2" height="1" fill="#0000ff"/>
<rect x="466" y="144" width="2" height="1" fill="#0000ff"/>
<rect x="466" y="138" width="4" height="1" fill="#0000ff"/>
<rect x="466" y="131" width="2" height="1" fill="#0000ff"/>
</svg>
<svg style="position:absolute;left:0;top:0" width="645" height="523" shape-rendering="crispEdges">
<defs><linearGradient id="g293" x1="0" y1="0" x2="0" y2="1"><stop offset="0" stop-color="#444444"/><stop offset="1" stop-color="#080808"/></linearGradient></defs>
<rect x="46" y="291" width="422" height="137" fill="#000"/>
<rect x="48" y="293" width="418" height="134" fill="url(#g293)"/>
<rect x="57" y="293" width="1" height="135" fill="#00009c"/>
<rect x="66" y="293" width="1" height="135" fill="#00009c"/>
<rect x="75" y="293" width="1" height="135" fill="#00009c"/>
<rect x="85" y="293" width="1" height="135" fill="#00009c"/>
<rect x="94" y="293" width="1" height="135" fill="#0000ff"/>
<rect x="103" y="293" width="1" height="135" fill="#00009c"/>
<rect x="113" y="293" width="1" height="135" fill="#00009c"/>
<rect x="122" y="293" width="1" height="135" fill="#00009c"/>
<rect x="131" y="293" width="1" height="135" fill="#00009c"/>
<rect x="140" y="293" width="1" height="135" fill="#0000ff"/>
<rect x="150" y="293" width="1" height="135" fill="#00009c"/>
<rect x="159" y="293" width="1" height="135" fill="#00009c"/>
<rect x="168" y="293" width="1" height="135" fill="#00009c"/>
<rect x="178" y="293" width="1" height="135" fill="#00009c"/>
<rect x="187" y="293" width="1" height="135" fill="#0000ff"/>
<rect x="196" y="293" width="1" height="135" fill="#00009c"/>
<rect x="205" y="293" width="1" height="135" fill="#00009c"/>
<rect x="215" y="293" width="1" height="135" fill="#00009c"/>
<rect x="224" y="293" width="1" height="135" fill="#00009c"/>
<rect x="233" y="293" width="1" height="135" fill="#0000ff"/>
<rect x="243" y="293" width="1" height="135" fill="#00009c"/>
<rect x="252" y="293" width="1" height="135" fill="#00009c"/>
<rect x="261" y="293" width="1" height="135" fill="#00009c"/>
<rect x="270" y="293" width="1" height="135" fill="#00009c"/>
<rect x="280" y="293" width="1" height="135" fill="#0000ff"/>
<rect x="289" y="293" width="1" height="135" fill="#00009c"/>
<rect x="298" y="293" width="1" height="135" fill="#00009c"/>
<rect x="308" y="293" width="1" height="135" fill="#00009c"/>
<rect x="317" y="293" width="1" height="135" fill="#00009c"/>
<rect x="326" y="293" width="1" height="135" fill="#0000ff"/>
<rect x="335" y="293" width="1" height="135" fill="#00009c"/>
<rect x="345" y="293" width="1" height="135" fill="#00009c"/>
<rect x="354" y="293" width="1" height="135" fill="#00009c"/>
<rect x="363" y="293" width="1" height="135" fill="#00009c"/>
<rect x="373" y="293" width="1" height="135" fill="#0000ff"/>
<rect x="382" y="293" width="1" height="135" fill="#00009c"/>
<rect x="391" y="293" width="1" height="135" fill="#00009c"/>
<rect x="400" y="293" width="1" height="135" fill="#00009c"/>
<rect x="410" y="293" width="1" height="135" fill="#00009c"/>
<rect x="419" y="293" width="1" height="135" fill="#0000ff"/>
<rect x="428" y="293" width="1" height="135" fill="#00009c"/>
<rect x="438" y="293" width="1" height="135" fill="#00009c"/>
<rect x="447" y="293" width="1" height="135" fill="#00009c"/>
<rect x="456" y="293" width="1" height="135" fill="#00009c"/>
<rect x="45" y="426" width="421" height="1" fill="#0000ff"/>
<rect x="45" y="413" width="421" height="1" fill="#00009c"/>
<rect x="45" y="400" width="421" height="1" fill="#0000ff"/>
<rect x="45" y="387" width="421" height="1" fill="#00009c"/>
<rect x="45" y="373" width="421" height="1" fill="#0000ff"/>
<rect x="45" y="360" width="421" height="1" fill="#00009c"/>
<rect x="45" y="347" width="421" height="1" fill="#0000ff"/>
<rect x="45" y="333" width="421" height="1" fill="#00009c"/>
<rect x="45" y="320" width="421" height="1" fill="#0000ff"/>
<rect x="45" y="307" width="421" height="1" fill="#00009c"/>
<rect x="45" y="293" width="421" height="1" fill="#0000ff"/>
<rect x="452" y="293" width="1" height="134" fill="#d8d8d8"/>
<rect x="48" y="413" width="1" height="14" fill="#00ff00"/>
<rect x="100" y="413" width="1" height="14" fill="#00ff00"/>
<rect x="138" y="413" width="1" height="14" fill="#00ff00"/>
<rect x="187" y="413" width="1" height="14" fill="#00ff00"/>
<rect x="194" y="413" width="1" height="14" fill="#00ff00"/>
<rect x="216" y="413" width="1" height="14" fill="#00ff00"/>
<rect x="252" y="413" width="1" height="14" fill="#00ff00"/>
<rect x="285" y="413" width="1" height="14" fill="#00ff00"/>
<rect x="291" y="413" width="1" height="14" fill="#00ff00"/>
<rect x="329" y="413" width="1" height="14" fill="#00ff00"/>
<rect x="351" y="413" width="1" height="14" fill="#00ff00"/>
<rect x="415" y="413" width="1" height="14" fill="#00ff00"/>
<rect x="432" y="413" width="1" height="14" fill="#00ff00"/>
<rect x="447" y="413" width="1" height="14" fill="#00ff00"/>
</svg>
<svg style="position:absolute;left:0;top:0" width="645" height="523" shape-rendering="crispEdges"><g fill="#ff00ff"><rect x="48" y="308" width="1" height="1"/><rect x="49" y="305" width="1" height="4"/><rect x="50" y="305" width="1" height="5"/><rect x="51" y="308" width="1" height="2"/><rect x="52" y="308" width="1" height="1"/><rect x="53" y="308" width="1" height="1"/><rect x="54" y="308" width="1" height="1"/><rect x="55" y="308" width="1" height="1"/><rect x="56" y="307" width="1" height="2"/><rect x="57" y="305" width="1" height="3"/><rect x="58" y="305" width="1" height="5"/><rect x="59" y="308" width="1" height="2"/><rect x="60" y="308" width="1" height="1"/><rect x="61" y="308" width="1" height="1"/><rect x="62" y="306" width="1" height="3"/><rect x="63" y="306" width="1" height="1"/><rect x="64" y="306" width="1" height="2"/><rect x="65" y="307" width="1" height="1"/><rect x="66" y="306" width="1" height="2"/><rect x="67" y="306" width="1" height="2"/><rect x="68" y="306" width="1" height="2"/><rect x="69" y="306" width="1" height="3"/><rect x="70" y="306" width="1" height="3"/><rect x="71" y="306" width="1" height="1"/><rect x="72" y="306" width="1" height="3"/><rect x="73" y="308" width="1" height="2"/><rect x="74" y="306" width="1" height="4"/><rect x="75" y="306" width="1" height="4"/><rect x="76" y="308" width="1" height="2"/><rect x="77" y="307" width="1" height="2"/><rect x="78" y="307" width="1" height="1"/><rect x="79" y="307" width="1" height="2"/><rect x="80" y="307" width="1" height="2"/><rect x="81" y="307" width="1" height="1"/><rect x="82" y="307" width="1" height="2"/><rect x="83" y="308" width="1" height="1"/><rect x="84" y="307" width="1" height="2"/><rect x="85" y="306" width="1" height="2"/><rect x="86" y="306" width="1" height="1"/><rect x="87" y="306" width="1" height="4"/><rect x="88" y="307" width="1" height="3"/><rect x="89" y="307" width="1" height="1"/><rect x="90" y="306" width="1" height="2"/><rect x="91" y="306" width="1" height="3"/><rect x="92" y="307" width="1" height="2"/><rect x="93" y="307" width="1" height="2"/><rect x="94" y="306" width="1" height="3"/><rect x="95" y="306" width="1" height="2"/><rect x="96" y="306" width="1" height="2"/><rect x="97" y="306" width="1" height="5"/><rect x="98" y="310" width="1" height="3"/><rect x="99" y="312" width="1" height="1"/><rect x="100" y="312" width="1" height="1"/><rect x="101" y="312" width="1" height="1"/><rect x="102" y="312" width="1" height="2"/><rect x="103" y="311" width="1" height="3"/><rect x="104" y="311" width="1" height="1"/><rect x="105" y="311" width="1" height="1"/><rect x="106" y="311" width="1" height="3"/><rect x="107" y="310" width="1" height="4"/><rect x="108" y="310" width="1" height="1"/><rect x="109" y="310" width="1" height="3"/><rect x="110" y="311" width="1" height="2"/><rect x="111" y="309" width="1" height="3"/><rect x="112" y="309" width="1" height="4"/><rect x="113" y="310" width="1" height="3"/><rect x="114" y="310" width="1" height="2"/><rect x="115" y="311" width="1" height="1"/><rect x="116" y="311" width="1" height="1"/><rect x="117" y="311" width="1" height="2"/><rect x="118" y="308" width="1" height="5"/><rect x="119" y="308" width="1" height="4"/><rect x="120" y="311" width="1" height="1"/><rect x="121" y="310" width="1" height="2"/><rect x="122" y="310" width="1" height="3"/><rect x="123" y="312" width="1" height="2"/><rect x="124" y="312" width="1" height="2"/><rect x="125" y="310" width="1" height="3"/><rect x="126" y="310" width="1" height="4"/><rect x="127" y="312" width="1" height="2"/><rect x="128" y="311" width="1" height="2"/><rect x="129" y="311" width="1" height="2"/><rect x="130" y="310" width="1" height="3"/><rect x="131" y="310" width="1" height="1"/><rect x="132" y="310" width="1" height="2"/><rect x="133" y="311" width="1" height="2"/><rect x="134" y="311" width="1" height="2"/><rect x="135" y="311" width="1" height="2"/><rect x="136" y="311" width="1" height="2"/><rect x="137" y="310" width="1" height="2"/><rect x="138" y="310" width="1" height="1"/><rect x="139" y="310" width="1" height="3"/><rect x="140" y="312" width="1" height="2"/><rect x="141" y="311" width="1" height="3"/><rect x="142" y="311" width="1" height="1"/><rect x="143" y="311" width="1" height="2"/><rect x="144" y="310" width="1" height="3"/><rect x="145" y="308" width="1" height="3"/><rect x="146" y="308" width="1" height="4"/><rect x="147" y="311" width="1" height="1"/><rect x="148" y="311" width="1" height="1"/><rect x="149" y="307" width="1" height="5"/><rect x="150" y="307" width="1" height="4"/><rect x="151" y="310" width="1" height="2"/><rect x="152" y="311" width="1" height="1"/><rect x="153" y="311" width="1" height="1"/><rect x="154" y="311" width="1" height="1"/><rect x="155" y="310" width="1" height="2"/><rect x="156" y="310" width="1" height="1"/><rect x="157" y="310" width="1" height="1"/><rect x="158" y="310" width="1" height="4"/><rect x="159" y="311" width="1" height="3"/><rect x="160" y="311" width="1" height="1"/><rect x="161" y="310" width="1" height="2"/><rect x="162" y="310" width="1" height="2"/><rect x="163" y="311" width="1" height="1"/><rect x="164" y="310" width="1" height="2"/><rect x="165" y="310" width="1" height="1"/><rect x="166" y="310" width="1" height="2"/><rect x="167" y="310" width="1" height="2"/><rect x="168" y="310" width="1" height="2"/><rect x="169" y="310" width="1" height="2"/><rect x="170" y="310" width="1" height="3"/><rect x="171" y="310" width="1" height="3"/><rect x="172" y="309" width="1" height="2"/><rect x="173" y="309" width="1" height="2"/><rect x="174" y="307" width="1" height="4"/><rect x="175" y="307" width="1" height="4"/><rect x="176" y="306" width="1" height="5"/><rect x="177" y="306" width="1" height="3"/><rect x="178" y="308" width="1" height="4"/><rect x="179" y="311" width="1" height="2"/><rect x="180" y="311" width="1" height="2"/><rect x="181" y="309" width="1" height="3"/><rect x="182" y="309" width="1" height="2"/><rect x="183" y="310" width="1" height="2"/><rect x="184" y="310" width="1" height="2"/><rect x="185" y="310" width="1" height="2"/><rect x="186" y="311" width="1" height="3"/><rect x="187" y="310" width="1" height="4"/><rect x="188" y="310" width="1" height="4"/><rect x="189" y="311" width="1" height="3"/><rect x="190" y="311" width="1" height="1"/><rect x="191" y="308" width="1" height="4"/><rect x="192" y="308" width="1" height="4"/><rect x="193" y="311" width="1" height="2"/><rect x="194" y="311" width="1" height="2"/><rect x="195" y="311" width="1" height="1"/><rect x="196" y="311" width="1" height="2"/><rect x="197" y="312" width="1" height="1"/><rect x="198" y="311" width="1" height="2"/><rect x="199" y="311" width="1" height="1"/><rect x="200" y="311" width="1" height="1"/><rect x="201" y="311" width="1" height="4"/><rect x="202" y="313" width="1" height="2"/><rect x="203" y="313" width="1" height="2"/><rect x="204" y="311" width="1" height="4"/><rect x="205" y="310" width="1" height="2"/><rect x="206" y="310" width="1" height="3"/><rect x="207" y="310" width="1" height="3"/><rect x="208" y="310" width="1" height="3"/><rect x="209" y="312" width="1" height="1"/><rect x="210" y="312" width="1" height="1"/><rect x="211" y="311" width="1" height="2"/><rect x="212" y="308" width="1" height="4"/><rect x="213" y="308" width="1" height="4"/><rect x="214" y="311" width="1" height="2"/><rect x="215" y="311" width="1" height="2"/><rect x="216" y="311" width="1" height="2"/><rect x="217" y="309" width="1" height="4"/><rect x="218" y="309" width="1" height="3"/><rect x="219" y="311" width="1" height="2"/><rect x="220" y="312" width="1" height="1"/><rect x="221" y="312" width="1" height="1"/><rect x="222" y="310" width="1" height="3"/><rect x="223" y="310" width="1" height="3"/><rect x="224" y="311" width="1" height="2"/><rect x="225" y="311" width="1" height="1"/><rect x="226" y="311" width="1" height="1"/><rect x="227" y="311" width="1" height="1"/><rect x="228" y="311" width="1" height="2"/><rect x="229" y="312" width="1" height="1"/><rect x="230" y="311" width="1" height="2"/><rect x="231" y="311" width="1" height="2"/><rect x="232" y="311" width="1" height="2"/><rect x="233" y="311" width="1" height="1"/><rect x="234" y="311" width="1" height="2"/><rect x="235" y="311" width="1" height="2"/><rect x="236" y="311" width="1" height="2"/><rect x="237" y="312" width="1" height="2"/><rect x="238" y="313" width="1" height="2"/><rect x="239" y="308" width="1" height="7"/><rect x="240" y="308" width="1" height="5"/><rect x="241" y="312" width="1" height="2"/><rect x="242" y="312" width="1" height="2"/><rect x="243" y="311" width="1" height="2"/><rect x="244" y="311" width="1" height="1"/><rect x="245" y="311" width="1" height="3"/><rect x="246" y="311" width="1" height="3"/><rect x="247" y="311" width="1" height="4"/><rect x="248" y="312" width="1" height="3"/><rect x="249" y="312" width="1" height="3"/><rect x="250" y="312" width="1" height="3"/><rect x="251" y="312" width="1" height="1"/><rect x="252" y="312" width="1" height="3"/><rect x="253" y="312" width="1" height="3"/><rect x="254" y="312" width="1" height="1"/><rect x="255" y="312" width="1" height="1"/><rect x="256" y="311" width="1" height="2"/><rect x="257" y="311" width="1" height="1"/><rect x="258" y="311" width="1" height="2"/><rect x="259" y="312" width="1" height="2"/><rect x="260" y="311" width="1" height="3"/><rect x="261" y="310" width="1" height="2"/><rect x="262" y="310" width="1" height="2"/><rect x="263" y="311" width="1" height="1"/><rect x="264" y="310" width="1" height="2"/><rect x="265" y="310" width="1" height="2"/><rect x="266" y="311" width="1" height="2"/><rect x="267" y="310" width="1" height="3"/><rect x="268" y="310" width="1" height="3"/><rect x="269" y="311" width="1" height="2"/><rect x="270" y="310" width="1" height="2"/><rect x="271" y="310" width="1" height="2"/><rect x="272" y="311" width="1" height="1"/><rect x="273" y="311" width="1" height="1"/><rect x="274" y="310" width="1" height="2"/><rect x="275" y="310" width="1" height="1"/><rect x="276" y="310" width="1" height="3"/><rect x="277" y="311" width="1" height="2"/><rect x="278" y="307" width="1" height="5"/><rect x="279" y="307" width="1" height="4"/><rect x="280" y="310" width="1" height="2"/><rect x="281" y="309" width="1" height="3"/><rect x="282" y="309" width="1" height="3"/><rect x="283" y="311" width="1" height="2"/><rect x="284" y="312" width="1" height="1"/><rect x="285" y="308" width="1" height="5"/><rect x="286" y="308" width="1" height="3"/><rect x="287" y="310" width="1" height="1"/><rect x="288" y="310" width="1" height="1"/><rect x="289" y="308" width="1" height="3"/><rect x="290" y="306" width="1" height="3"/><rect x="291" y="306" width="1" height="6"/><rect x="292" y="310" width="1" height="2"/><rect x="293" y="310" width="1" height="2"/><rect x="294" y="311" width="1" height="2"/><rect x="295" y="312" width="1" height="1"/><rect x="296" y="310" width="1" height="3"/><rect x="297" y="310" width="1" height="1"/><rect x="298" y="310" width="1" height="2"/><rect x="299" y="310" width="1" height="2"/><rect x="300" y="310" width="1" height="2"/><rect x="301" y="310" width="1" height="2"/><rect x="302" y="308" width="1" height="3"/><rect x="303" y="308" width="1" height="3"/><rect x="304" y="308" width="1" height="3"/><rect x="305" y="308" width="1" height="3"/><rect x="306" y="309" width="1" height="2"/><rect x="307" y="309" width="1" height="2"/><rect x="308" y="310" width="1" height="1"/><rect x="309" y="309" width="1" height="2"/><rect x="310" y="309" width="1" height="2"/><rect x="311" y="310" width="1" height="1"/><rect x="312" y="310" width="1" height="1"/><rect x="313" y="310" width="1" height="2"/><rect x="314" y="311" width="1" height="1"/><rect x="315" y="311" width="1" height="2"/><rect x="316" y="311" width="1" height="2"/><rect x="317" y="310" width="1" height="2"/><rect x="318" y="307" width="1" height="4"/><rect x="319" y="307" width="1" height="4"/><rect x="320" y="310" width="1" height="1"/><rect x="321" y="310" width="1" height="1"/><rect x="322" y="310" width="1" height="1"/><rect x="323" y="310" width="1" height="2"/><rect x="324" y="310" width="1" height="2"/><rect x="325" y="309" width="1" height="2"/><rect x="326" y="305" width="1" height="5"/><rect x="327" y="305" width="1" height="5"/><rect x="328" y="309" width="1" height="1"/><rect x="329" y="309" width="1" height="1"/><rect x="330" y="309" width="1" height="3"/><rect x="331" y="309" width="1" height="3"/><rect x="332" y="309" width="1" height="2"/><rect x="333" y="310" width="1" height="1"/><rect x="334" y="309" width="1" height="2"/><rect x="335" y="309" width="1" height="2"/><rect x="336" y="307" width="1" height="4"/><rect x="337" y="307" width="1" height="4"/><rect x="338" y="309" width="1" height="2"/><rect x="339" y="309" width="1" height="2"/><rect x="340" y="309" width="1" height="2"/><rect x="341" y="309" width="1" height="4"/><rect x="342" y="309" width="1" height="4"/><rect x="343" y="309" width="1" height="1"/><rect x="344" y="309" width="1" height="2"/><rect x="345" y="310" width="1" height="1"/><rect x="346" y="309" width="1" height="2"/><rect x="347" y="309" width="1" height="1"/><rect x="348" y="308" width="1" height="2"/><rect x="349" y="308" width="1" height="2"/><rect x="350" y="308" width="1" height="2"/><rect x="351" y="307" width="1" height="2"/><rect x="352" y="307" width="1" height="3"/><rect x="353" y="309" width="1" height="2"/><rect x="354" y="310" width="1" height="1"/><rect x="355" y="308" width="1" height="3"/><rect x="356" y="308" width="1" height="3"/><rect x="357" y="308" width="1" height="3"/><rect x="358" y="308" width="1" height="4"/><rect x="359" y="311" width="1" height="1"/><rect x="360" y="309" width="1" height="3"/><rect x="361" y="309" width="1" height="2"/><rect x="362" y="308" width="1" height="3"/><rect x="363" y="308" width="1" height="5"/><rect x="364" y="309" width="1" height="4"/><rect x="365" y="306" width="1" height="4"/><rect x="366" y="306" width="1" height="5"/><rect x="367" y="310" width="1" height="3"/><rect x="368" y="310" width="1" height="3"/><rect x="369" y="310" width="1" height="1"/><rect x="370" y="310" width="1" height="1"/><rect x="371" y="310" width="1" height="1"/><rect x="372" y="310" width="1" height="1"/><rect x="373" y="310" width="1" height="4"/><rect x="374" y="311" width="1" height="3"/><rect x="375" y="310" width="1" height="2"/><rect x="376" y="310" width="1" height="1"/><rect x="377" y="310" width="1" height="4"/><rect x="378" y="312" width="1" height="2"/><rect x="379" y="309" width="1" height="4"/><rect x="380" y="309" width="1" height="1"/><rect x="381" y="309" width="1" height="1"/><rect x="382" y="309" width="1" height="1"/><rect x="383" y="309" width="1" height="2"/><rect x="384" y="310" width="1" height="2"/><rect x="385" y="310" width="1" height="2"/><rect x="386" y="308" width="1" height="3"/><rect x="387" y="308" width="1" height="2"/><rect x="388" y="309" width="1" height="1"/><rect x="389" y="308" width="1" height="2"/><rect x="390" y="308" width="1" height="1"/><rect x="391" y="308" width="1" height="4"/><rect x="392" y="309" width="1" height="3"/><rect x="393" y="309" width="1" height="1"/><rect x="394" y="309" width="1" height="1"/><rect x="395" y="309" width="1" height="1"/><rect x="396" y="309" width="1" height="2"/><rect x="397" y="308" width="1" height="3"/><rect x="398" y="306" width="1" height="3"/><rect x="399" y="306" width="1" height="2"/><rect x="400" y="307" width="1" height="1"/><rect x="401" y="307" width="1" height="2"/><rect x="402" y="308" width="1" height="2"/><rect x="403" y="308" width="1" height="2"/><rect x="404" y="308" width="1" height="2"/><rect x="405" y="309" width="1" height="2"/><rect x="406" y="308" width="1" height="3"/><rect x="407" y="307" width="1" height="2"/><rect x="408" y="305" width="1" height="3"/><rect x="409" y="305" width="1" height="5"/><rect x="410" y="308" width="1" height="2"/><rect x="411" y="307" width="1" height="2"/><rect x="412" y="307" width="1" height="1"/><rect x="413" y="307" width="1" height="4"/><rect x="414" y="307" width="1" height="4"/><rect x="415" y="307" width="1" height="2"/><rect x="416" y="302" width="1" height="7"/><rect x="417" y="302" width="1" height="6"/><rect x="418" y="307" width="1" height="1"/><rect x="419" y="305" width="1" height="3"/><rect x="420" y="305" width="1" height="1"/><rect x="421" y="305" width="1" height="1"/><rect x="422" y="305" width="1" height="2"/><rect x="423" y="306" width="1" height="1"/><rect x="424" y="302" width="1" height="5"/><rect x="425" y="300" width="1" height="3"/><rect x="426" y="300" width="1" height="10"/><rect x="427" y="304" width="1" height="6"/><rect x="428" y="304" width="1" height="1"/><rect x="429" y="304" width="1" height="3"/><rect x="430" y="306" width="1" height="1"/><rect x="431" y="303" width="1" height="4"/><rect x="432" y="303" width="1" height="2"/><rect x="433" y="304" width="1" height="1"/><rect x="434" y="304" width="1" height="1"/><rect x="435" y="304" width="1" height="1"/><rect x="436" y="301" width="1" height="4"/><rect x="437" y="301" width="1" height="4"/><rect x="438" y="303" width="1" height="2"/><rect x="439" y="303" width="1" height="3"/><rect x="440" y="305" width="1" height="1"/><rect x="441" y="305" width="1" height="1"/><rect x="442" y="304" width="1" height="2"/><rect x="443" y="304" width="1" height="2"/><rect x="444" y="304" width="1" height="2"/><rect x="445" y="304" width="1" height="1"/><rect x="446" y="304" width="1" height="5"/><rect x="447" y="308" width="1" height="1"/><rect x="448" y="305" width="1" height="4"/><rect x="449" y="305" width="1" height="4"/><rect x="450" y="307" width="1" height="2"/><rect x="451" y="307" width="1" height="2"/></g></svg>
<div id="t15" style="position:absolute;right:603px;top:124px;line-height:13px;font-size:12px;color:#000;font-weight:normal;white-space:nowrap;">10</div>
<div id="t16" style="position:absolute;right:603px;top:286px;line-height:13px;font-size:12px;color:#000;font-weight:normal;white-space:nowrap;">10</div>
<div id="t17" style="position:absolute;left:471px;top:286px;line-height:13px;font-size:12px;color:#000;font-weight:normal;white-space:nowrap;">10</div>
<div id="t18" style="position:absolute;right:603px;top:151px;line-height:13px;font-size:12px;color:#000;font-weight:normal;white-space:nowrap;">8</div>
<div id="t19" style="position:absolute;right:603px;top:313px;line-height:13px;font-size:12px;color:#000;font-weight:normal;white-space:nowrap;">8</div>
<div id="t20" style="position:absolute;left:471px;top:313px;line-height:13px;font-size:12px;color:#000;font-weight:normal;white-space:nowrap;">8</div>
<div id="t21" style="position:absolute;right:603px;top:178px;line-height:13px;font-size:12px;color:#000;font-weight:normal;white-space:nowrap;">6</div>
<div id="t22" style="position:absolute;right:603px;top:340px;line-height:13px;font-size:12px;color:#000;font-weight:normal;white-space:nowrap;">6</div>
<div id="t23" style="position:absolute;left:471px;top:340px;line-height:13px;font-size:12px;color:#000;font-weight:normal;white-space:nowrap;">6</div>
<div id="t24" style="position:absolute;right:603px;top:204px;line-height:13px;font-size:12px;color:#000;font-weight:normal;white-space:nowrap;">4</div>
<div id="t25" style="position:absolute;right:603px;top:366px;line-height:13px;font-size:12px;color:#000;font-weight:normal;white-space:nowrap;">4</div>
<div id="t26" style="position:absolute;left:471px;top:366px;line-height:13px;font-size:12px;color:#000;font-weight:normal;white-space:nowrap;">4</div>
<div id="t27" style="position:absolute;right:603px;top:231px;line-height:13px;font-size:12px;color:#000;font-weight:normal;white-space:nowrap;">2</div>
<div id="t28" style="position:absolute;right:603px;top:393px;line-height:13px;font-size:12px;color:#000;font-weight:normal;white-space:nowrap;">2</div>
<div id="t29" style="position:absolute;left:471px;top:393px;line-height:13px;font-size:12px;color:#000;font-weight:normal;white-space:nowrap;">2</div>
<div id="t30" style="position:absolute;left:471px;top:131px;line-height:13px;font-size:12px;color:#000;font-weight:normal;white-space:nowrap;">20</div>
<div id="t31" style="position:absolute;left:471px;top:156px;line-height:13px;font-size:12px;color:#000;font-weight:normal;white-space:nowrap;">16</div>
<div id="t32" style="position:absolute;left:471px;top:181px;line-height:13px;font-size:12px;color:#000;font-weight:normal;white-space:nowrap;">12</div>
<div id="t33" style="position:absolute;left:471px;top:207px;line-height:13px;font-size:12px;color:#000;font-weight:normal;white-space:nowrap;">8</div>
<div id="t34" style="position:absolute;left:471px;top:232px;line-height:13px;font-size:12px;color:#000;font-weight:normal;white-space:nowrap;">4</div>
<div style="position:absolute;left:35.0px;width:30px;text-align:center;top:268px;line-height:13px;font-size:12px;">0.0</div>
<div style="position:absolute;left:35.0px;width:30px;text-align:center;top:430px;line-height:13px;font-size:12px;">0.0</div>
<div style="position:absolute;left:81.4px;width:30px;text-align:center;top:268px;line-height:13px;font-size:12px;">0.5</div>
<div style="position:absolute;left:81.4px;width:30px;text-align:center;top:430px;line-height:13px;font-size:12px;">0.5</div>
<div style="position:absolute;left:127.9px;width:30px;text-align:center;top:268px;line-height:13px;font-size:12px;">1.0</div>
<div style="position:absolute;left:127.9px;width:30px;text-align:center;top:430px;line-height:13px;font-size:12px;">1.0</div>
<div style="position:absolute;left:174.3px;width:30px;text-align:center;top:268px;line-height:13px;font-size:12px;">1.5</div>
<div style="position:absolute;left:174.3px;width:30px;text-align:center;top:430px;line-height:13px;font-size:12px;">1.5</div>
<div style="position:absolute;left:220.8px;width:30px;text-align:center;top:268px;line-height:13px;font-size:12px;">2.0</div>
<div style="position:absolute;left:220.8px;width:30px;text-align:center;top:430px;line-height:13px;font-size:12px;">2.0</div>
<div style="position:absolute;left:267.2px;width:30px;text-align:center;top:268px;line-height:13px;font-size:12px;">2.5</div>
<div style="position:absolute;left:267.2px;width:30px;text-align:center;top:430px;line-height:13px;font-size:12px;">2.5</div>
<div style="position:absolute;left:313.7px;width:30px;text-align:center;top:268px;line-height:13px;font-size:12px;">3.0</div>
<div style="position:absolute;left:313.7px;width:30px;text-align:center;top:430px;line-height:13px;font-size:12px;">3.0</div>
<div style="position:absolute;left:360.1px;width:30px;text-align:center;top:268px;line-height:13px;font-size:12px;">3.5</div>
<div style="position:absolute;left:360.1px;width:30px;text-align:center;top:430px;line-height:13px;font-size:12px;">3.5</div>
<div style="position:absolute;left:406.6px;width:30px;text-align:center;top:268px;line-height:13px;font-size:12px;">4.0</div>
<div style="position:absolute;left:406.6px;width:30px;text-align:center;top:430px;line-height:13px;font-size:12px;">4.0</div>
<div style="position:absolute;left:453.0px;width:30px;text-align:center;top:268px;line-height:13px;font-size:12px;">4.5</div>
<div style="position:absolute;left:453.0px;width:30px;text-align:center;top:430px;line-height:13px;font-size:12px;">4.5</div>
<div style="position:absolute;left:491px;top:124px;width:137px;height:81px;border:1px solid #808080;box-shadow:1px 1px 0 #ffffff, inset 1px 1px 0 #ffffff;"></div>
<div style="position:absolute;left:498px;top:123px;width:45px;height:4px;background:#d4d0c8;"></div>
<div id="t35" style="position:absolute;left:499.50px;top:120px;line-height:13px;font-size:12px;color:#000;font-weight:normal;white-space:nowrap;transform:scaleX(0.9043);transform-origin:0 0;">Disk-Info</div>
<div id="t36" style="position:absolute;left:500.00px;top:134px;line-height:13px;font-size:12px;color:#000;font-weight:normal;white-space:nowrap;transform:scaleX(0.9000);transform-origin:0 0;">Typ:</div>
<div id="t37" style="position:absolute;left:544.49px;top:134px;line-height:13px;font-size:12px;color:#000080;font-weight:normal;white-space:nowrap;transform:scaleX(0.9128);transform-origin:0 0;">DVD+R</div>
<div id="t38" style="position:absolute;left:499.08px;top:151px;line-height:13px;font-size:12px;color:#000;font-weight:normal;white-space:nowrap;transform:scaleX(0.9231);transform-origin:0 0;">ID:</div>
<div id="t39" style="position:absolute;left:545.40px;top:151px;line-height:13px;font-size:12px;color:#000080;font-weight:normal;white-space:nowrap;transform:scaleX(0.9012);transform-origin:0 0;">YUDEN000 T01</div>
<div id="t40" style="position:absolute;left:499.13px;top:169px;line-height:13px;font-size:12px;color:#000;font-weight:normal;white-space:nowrap;transform:scaleX(0.8730);transform-origin:0 0;">Datum:</div>
<div id="t41" style="position:absolute;left:545.40px;top:169px;line-height:13px;font-size:12px;color:#000080;font-weight:normal;white-space:nowrap;transform:scaleX(0.8913);transform-origin:0 0;">20 May 2007</div>
<div id="t42" style="position:absolute;left:499.12px;top:187px;line-height:13px;font-size:12px;color:#000;font-weight:normal;white-space:nowrap;transform:scaleX(0.8806);transform-origin:0 0;">Label:</div>
<div style="position:absolute;left:540px;top:182px;width:66px;height:19px;background:#fff;"></div>
<div style="position:absolute;left:491px;top:215px;width:137px;height:202px;border:1px solid #808080;box-shadow:1px 1px 0 #ffffff, inset 1px 1px 0 #ffffff;"></div>
<div style="position:absolute;left:498px;top:214px;width:66px;height:4px;background:#d4d0c8;"></div>
<div id="t43" style="position:absolute;left:499.52px;top:211px;line-height:13px;font-size:12px;color:#000;font-weight:normal;white-space:nowrap;transform:scaleX(0.8803);transform-origin:0 0;">Einstellungen</div>
<div style="position:absolute;left:500px;top:225px;width:84px;height:21px;background:#ffffff;"></div>
<div style="position:absolute;left:500px;top:225px;width:83px;height:20px;background:#808080;"></div>
<div style="position:absolute;left:501px;top:226px;width:82px;height:19px;background:#d4d0c8;"></div>
<div style="position:absolute;left:501px;top:226px;width:81px;height:18px;background:#404040;"></div>
<div style="position:absolute;left:502px;top:227px;width:80px;height:17px;background:#fff;"></div>
<div style="position:absolute;left:566px;top:227px;width:16px;height:17px;background:#404040;"></div>
<div style="position:absolute;left:566px;top:227px;width:15px;height:16px;background:#ffffff;"></div>
<div style="position:absolute;left:567px;top:228px;width:14px;height:15px;background:#808080;"></div>
<div style="position:absolute;left:567px;top:228px;width:13px;height:14px;background:#d4d0c8;"></div>
<svg style="position:absolute;left:570px;top:234px" width="7" height="4" shape-rendering="crispEdges"><path d="M0 0h7v1h-1v1h-1v1h-1v1h-1v-1h-1v-1h-1v-1h-1z" fill="#000"/></svg>
<div id="t44" style="position:absolute;left:504.50px;top:231px;line-height:13px;font-size:12px;color:#000;font-weight:normal;white-space:nowrap;transform:scaleX(0.8944);transform-origin:0 0;">4 X</div>
<div style="position:absolute;left:592px;top:224px;width:23px;height:23px;background:#404040;"></div>
<div style="position:absolute;left:592px;top:224px;width:22px;height:22px;background:#ffffff;"></div>
<div style="position:absolute;left:593px;top:225px;width:21px;height:21px;background:#808080;"></div>
<div style="position:absolute;left:593px;top:225px;width:20px;height:20px;background:#d4d0c8;"></div>
<svg style="position:absolute;left:595px;top:227px" width="16" height="16" viewBox="0 0 16 16">
<rect x="1.5" y="0.5" width="13" height="15" fill="#fff" stroke="#000" stroke-width="1.2"/>
<path d="M4.6 9.2 V5.6 H7.5" fill="none" stroke="#008000" stroke-width="1.3"/>
<path d="M6.8 2.8 L10.3 5.6 L6.8 8.4Z" fill="#008000"/>
<path d="M11.4 7.6 V11.2 H8.5" fill="none" stroke="#008000" stroke-width="1.3"/>
<path d="M9.2 8.4 L5.7 11.2 L9.2 14Z" fill="#008000"/>
</svg>
<div id="t45" style="position:absolute;left:501.81px;top:257px;line-height:13px;font-size:12px;color:#000;font-weight:normal;white-space:nowrap;transform:scaleX(0.8852);transform-origin:0 0;">Start:</div>
<div style="position:absolute;left:554px;top:251px;width:60px;height:20px;background:#ffffff;"></div>
<div style="position:absolute;left:554px;top:251px;width:59px;height:19px;background:#808080;"></div>
<div style="position:absolute;left:555px;top:252px;width:58px;height:18px;background:#d4d0c8;"></div>
<div style="position:absolute;left:555px;top:252px;width:57px;height:17px;background:#404040;"></div>
<div style="position:absolute;left:556px;top:253px;width:56px;height:16px;background:#fff;"></div>
<div id="t46" style="position:absolute;left:557.50px;top:255px;line-height:13px;font-size:12px;color:#000;font-weight:normal;white-space:nowrap;transform:scaleX(0.8872);transform-origin:0 0;">0000 MB</div>
<div id="t47" style="position:absolute;left:501.78px;top:280px;line-height:13px;font-size:12px;color:#000;font-weight:normal;white-space:nowrap;transform:scaleX(0.9172);transform-origin:0 0;">Ende:</div>
<div style="position:absolute;left:554px;top:274px;width:60px;height:20px;background:#ffffff;"></div>
<div style="position:absolute;left:554px;top:274px;width:59px;height:19px;background:#808080;"></div>
<div style="position:absolute;left:555px;top:275px;width:58px;height:18px;background:#d4d0c8;"></div>
<div style="position:absolute;left:555px;top:275px;width:57px;height:17px;background:#404040;"></div>
<div style="position:absolute;left:556px;top:276px;width:56px;height:16px;background:#fff;"></div>
<div id="t48" style="position:absolute;left:557.50px;top:278px;line-height:13px;font-size:12px;color:#000;font-weight:normal;white-space:nowrap;transform:scaleX(0.8872);transform-origin:0 0;">4459 MB</div>
<div style="position:absolute;left:502px;top:296px;width:13px;height:13px;background:#ffffff;"></div>
<div style="position:absolute;left:502px;top:296px;width:12px;height:12px;background:#808080;"></div>
<div style="position:absolute;left:503px;top:297px;width:11px;height:11px;background:#d4d0c8;"></div>
<div style="position:absolute;left:503px;top:297px;width:10px;height:10px;background:#404040;"></div>
<div style="position:absolute;left:504px;top:298px;width:9px;height:9px;background:#fff;"></div>
<div id="t49" style="position:absolute;left:519.18px;top:297px;line-height:13px;font-size:12px;color:#000;font-weight:normal;white-space:nowrap;transform:scaleX(0.9158);transform-origin:0 0;">Schnelles Scannen</div>
<div style="position:absolute;left:502px;top:314px;width:13px;height:13px;background:#ffffff;"></div>
<div style="position:absolute;left:502px;top:314px;width:12px;height:12px;background:#808080;"></div>
<div style="position:absolute;left:503px;top:315px;width:11px;height:11px;background:#d4d0c8;"></div>
<div style="position:absolute;left:503px;top:315px;width:10px;height:10px;background:#404040;"></div>
<div style="position:absolute;left:504px;top:316px;width:9px;height:9px;background:#fff;"></div>
<svg style="position:absolute;left:502px;top:314px" width="13" height="13" shape-rendering="crispEdges"><g fill="#000"><rect x="9" y="3" width="1" height="1"/><rect x="8" y="4" width="1" height="1"/><rect x="9" y="4" width="1" height="1"/><rect x="3" y="5" width="1" height="1"/><rect x="7" y="5" width="1" height="1"/><rect x="8" y="5" width="1" height="1"/><rect x="9" y="5" width="1" height="1"/><rect x="3" y="6" width="1" height="1"/><rect x="4" y="6" width="1" height="1"/><rect x="6" y="6" width="1" height="1"/><rect x="7" y="6" width="1" height="1"/><rect x="8" y="6" width="1" height="1"/><rect x="3" y="7" width="1" height="1"/><rect x="4" y="7" width="1" height="1"/><rect x="5" y="7" width="1" height="1"/><rect x="6" y="7" width="1" height="1"/><rect x="7" y="7" width="1" height="1"/><rect x="4" y="8" width="1" height="1"/><rect x="5" y="8" width="1" height="1"/><rect x="6" y="8" width="1" height="1"/><rect x="5" y="9" width="1" height="1"/></g></svg>
<div id="t50" style="position:absolute;left:519.19px;top:315px;line-height:13px;font-size:12px;color:#000;font-weight:normal;white-space:nowrap;transform:scaleX(0.9124);transform-origin:0 0;">C1/PIE anzeigen</div>
<div style="position:absolute;left:502px;top:329px;width:13px;height:13px;background:#ffffff;"></div>
<div style="position:absolute;left:502px;top:329px;width:12px;height:12px;background:#808080;"></div>
<div style="position:absolute;left:503px;top:330px;width:11px;height:11px;background:#d4d0c8;"></div>
<div style="position:absolute;left:503px;top:330px;width:10px;height:10px;background:#404040;"></div>
<div style="position:absolute;left:504px;top:331px;width:9px;height:9px;background:#fff;"></div>
<svg style="position:absolute;left:502px;top:329px" width="13" height="13" shape-rendering="crispEdges"><g fill="#000"><rect x="9" y="3" width="1" height="1"/><rect x="8" y="4" width="1" height="1"/><rect x="9" y="4" width="1" height="1"/><rect x="3" y="5" width="1" height="1"/><rect x="7" y="5" width="1" height="1"/><rect x="8" y="5" width="1" height="1"/><rect x="9" y="5" width="1" height="1"/><rect x="3" y="6" width="1" height="1"/><rect x="4" y="6" width="1" height="1"/><rect x="6" y="6" width="1" height="1"/><rect x="7" y="6" width="1" height="1"/><rect x="8" y="6" width="1" height="1"/><rect x="3" y="7" width="1" height="1"/><rect x="4" y="7" width="1" height="1"/><rect x="5" y="7" width="1" height="1"/><rect x="6" y="7" width="1" height="1"/><rect x="7" y="7" width="1" height="1"/><rect x="4" y="8" width="1" height="1"/><rect x="5" y="8" width="1" height="1"/><rect x="6" y="8" width="1" height="1"/><rect x="5" y="9" width="1" height="1"/></g></svg>
<div id="t51" style="position:absolute;left:519.19px;top:330px;line-height:13px;font-size:12px;color:#000;font-weight:normal;white-space:nowrap;transform:scaleX(0.9125);transform-origin:0 0;">C2/PIF anzeigen</div>
<div style="position:absolute;left:502px;top:345px;width:13px;height:13px;background:#ffffff;"></div>
<div style="position:absolute;left:502px;top:345px;width:12px;height:12px;background:#808080;"></div>
<div style="position:absolute;left:503px;top:346px;width:11px;height:11px;background:#d4d0c8;"></div>
<div style="position:absolute;left:503px;top:346px;width:10px;height:10px;background:#404040;"></div>
<div style="position:absolute;left:504px;top:347px;width:9px;height:9px;background:#fff;"></div>
<svg style="position:absolute;left:502px;top:345px" width="13" height="13" shape-rendering="crispEdges"><g fill="#000"><rect x="9" y="3" width="1" height="1"/><rect x="8" y="4" width="1" height="1"/><rect x="9" y="4" width="1" height="1"/><rect x="3" y="5" width="1" height="1"/><rect x="7" y="5" width="1" height="1"/><rect x="8" y="5" width="1" height="1"/><rect x="9" y="5" width="1" height="1"/><rect x="3" y="6" width="1" height="1"/><rect x="4" y="6" width="1" height="1"/><rect x="6" y="6" width="1" height="1"/><rect x="7" y="6" width="1" height="1"/><rect x="8" y="6" width="1" height="1"/><rect x="3" y="7" width="1" height="1"/><rect x="4" y="7" width="1" height="1"/><rect x="5" y="7" width="1" height="1"/><rect x="6" y="7" width="1" height="1"/><rect x="7" y="7" width="1" height="1"/><rect x="4" y="8" width="1" height="1"/><rect x="5" y="8" width="1" height="1"/><rect x="6" y="8" width="1" height="1"/><rect x="5" y="9" width="1" height="1"/></g></svg>
<div id="t52" style="position:absolute;left:519.75px;top:346px;line-height:13px;font-size:12px;color:#000;font-weight:normal;white-space:nowrap;transform:scaleX(0.8890);transform-origin:0 0;">Jitter anzeigen</div>
<div style="position:absolute;left:502px;top:361px;width:13px;height:13px;background:#ffffff;"></div>
<div style="position:absolute;left:502px;top:361px;width:12px;height:12px;background:#808080;"></div>
<div style="position:absolute;left:503px;top:362px;width:11px;height:11px;background:#d4d0c8;"></div>
<div style="position:absolute;left:503px;top:362px;width:10px;height:10px;background:#404040;"></div>
<div style="position:absolute;left:504px;top:363px;width:9px;height:9px;background:#fff;"></div>
<svg style="position:absolute;left:502px;top:361px" width="13" height="13" shape-rendering="crispEdges"><g fill="#000"><rect x="9" y="3" width="1" height="1"/><rect x="8" y="4" width="1" height="1"/><rect x="9" y="4" width="1" height="1"/><rect x="3" y="5" width="1" height="1"/><rect x="7" y="5" width="1" height="1"/><rect x="8" y="5" width="1" height="1"/><rect x="9" y="5" width="1" height="1"/><rect x="3" y="6" width="1" height="1"/><rect x="4" y="6" width="1" height="1"/><rect x="6" y="6" width="1" height="1"/><rect x="7" y="6" width="1" height="1"/><rect x="8" y="6" width="1" height="1"/><rect x="3" y="7" width="1" height="1"/><rect x="4" y="7" width="1" height="1"/><rect x="5" y="7" width="1" height="1"/><rect x="6" y="7" width="1" height="1"/><rect x="7" y="7" width="1" height="1"/><rect x="4" y="8" width="1" height="1"/><rect x="5" y="8" width="1" height="1"/><rect x="6" y="8" width="1" height="1"/><rect x="5" y="9" width="1" height="1"/></g></svg>
<div id="t53" style="position:absolute;left:519.75px;top:362px;line-height:13px;font-size:12px;color:#000;font-weight:normal;white-space:nowrap;transform:scaleX(0.9103);transform-origin:0 0;">Zeige Lesegeschw.</div>
<div style="position:absolute;left:502px;top:377px;width:13px;height:13px;background:#ffffff;"></div>
<div style="position:absolute;left:502px;top:377px;width:12px;height:12px;background:#808080;"></div>
<div style="position:absolute;left:503px;top:378px;width:11px;height:11px;background:#d4d0c8;"></div>
<div style="position:absolute;left:503px;top:378px;width:10px;height:10px;background:#404040;"></div>
<div style="position:absolute;left:504px;top:379px;width:9px;height:9px;background:#d4d0c8;"></div>
<svg style="position:absolute;left:502px;top:377px" width="13" height="13" shape-rendering="crispEdges"><g fill="#808080"><rect x="9" y="3" width="1" height="1"/><rect x="8" y="4" width="1" height="1"/><rect x="9" y="4" width="1" height="1"/><rect x="3" y="5" width="1" height="1"/><rect x="7" y="5" width="1" height="1"/><rect x="8" y="5" width="1" height="1"/><rect x="9" y="5" width="1" height="1"/><rect x="3" y="6" width="1" height="1"/><rect x="4" y="6" width="1" height="1"/><rect x="6" y="6" width="1" height="1"/><rect x="7" y="6" width="1" height="1"/><rect x="8" y="6" width="1" height="1"/><rect x="3" y="7" width="1" height="1"/><rect x="4" y="7" width="1" height="1"/><rect x="5" y="7" width="1" height="1"/><rect x="6" y="7" width="1" height="1"/><rect x="7" y="7" width="1" height="1"/><rect x="4" y="8" width="1" height="1"/><rect x="5" y="8" width="1" height="1"/><rect x="6" y="8" width="1" height="1"/><rect x="5" y="9" width="1" height="1"/></g></svg>
<div id="t54" style="position:absolute;left:520.75px;top:379px;line-height:13px;font-size:12px;color:#fff;font-weight:normal;white-space:nowrap;transform:scaleX(0.9082);transform-origin:0 0;">Zeige Schreibgeschw.</div>
<div id="t55" style="position:absolute;left:519.75px;top:378px;line-height:13px;font-size:12px;color:#808080;font-weight:normal;white-space:nowrap;transform:scaleX(0.9082);transform-origin:0 0;">Zeige Schreibgeschw.</div>
<div style="position:absolute;left:550px;top:393px;width:76px;height:23px;background:#404040;"></div>
<div style="position:absolute;left:550px;top:393px;width:75px;height:22px;background:#ffffff;"></div>
<div style="position:absolute;left:551px;top:394px;width:74px;height:21px;background:#808080;"></div>
<div style="position:absolute;left:551px;top:394px;width:73px;height:20px;background:#d4d0c8;"></div>
<div id="t56" style="position:absolute;left:566.72px;top:398px;line-height:13px;font-size:12px;color:#000;font-weight:normal;white-space:nowrap;transform:scaleX(0.8848);transform-origin:0 0;">Erweitert</div>
<div style="position:absolute;left:491px;top:425px;width:137px;height:23px;border:1px solid #808080;box-shadow:1px 1px 0 #ffffff, inset 1px 1px 0 #ffffff;"></div>
<div id="t57" style="position:absolute;left:502.50px;top:433px;line-height:13px;font-size:12px;color:#000;font-weight:normal;white-space:nowrap;transform:scaleX(0.8731);transform-origin:0 0;">Qualitätsindex:</div>
<div id="t58" style="position:absolute;left:608.90px;top:433px;line-height:13px;font-size:12px;color:#000080;font-weight:normal;white-space:nowrap;transform:scaleX(0.8846);transform-origin:0 0;">98</div>
<div style="position:absolute;left:491px;top:457px;width:137px;height:54px;border:1px solid #808080;box-shadow:1px 1px 0 #ffffff, inset 1px 1px 0 #ffffff;"></div>
<div id="t59" style="position:absolute;left:501.94px;top:467px;line-height:13px;font-size:12px;color:#000;font-weight:normal;white-space:nowrap;transform:scaleX(0.8618);transform-origin:0 0;">Fortschritt:</div>
<div id="t60" style="position:absolute;left:591.94px;top:467px;line-height:13px;font-size:12px;color:#000080;font-weight:normal;white-space:nowrap;transform:scaleX(0.8606);transform-origin:0 0;">100 %</div>
<div id="t61" style="position:absolute;left:501.93px;top:483px;line-height:13px;font-size:12px;color:#000;font-weight:normal;white-space:nowrap;transform:scaleX(0.8705);transform-origin:0 0;">Position:</div>
<div id="t62" style="position:absolute;left:578.80px;top:483px;line-height:13px;font-size:12px;color:#000080;font-weight:normal;white-space:nowrap;transform:scaleX(0.8809);transform-origin:0 0;">4458 MB</div>
<div id="t63" style="position:absolute;left:501.91px;top:498px;line-height:13px;font-size:12px;color:#000;font-weight:normal;white-space:nowrap;transform:scaleX(0.8933);transform-origin:0 0;">Geschwindigkeit:</div>
<div id="t64" style="position:absolute;left:589.98px;top:498px;line-height:13px;font-size:12px;color:#000080;font-weight:normal;white-space:nowrap;transform:scaleX(0.9182);transform-origin:0 0;">3.96 X</div>
<div style="position:absolute;left:14px;top:457px;width:144px;height:55px;border:1px solid #808080;box-shadow:1px 1px 0 #ffffff, inset 1px 1px 0 #ffffff;"></div>
<div style="position:absolute;left:21px;top:452px;width:56px;height:10px;background:#d4d0c8;"></div>
<div style="position:absolute;left:24px;top:454px;width:8px;height:8px;background:#000;"></div>
<div style="position:absolute;left:25px;top:455px;width:6px;height:6px;background:#00ffff;"></div>
<div id="t65" style="position:absolute;left:34.95px;top:452px;line-height:13px;font-size:12px;color:#000;font-weight:normal;white-space:nowrap;transform:scaleX(0.8500);transform-origin:0 0;">PI Errors</div>
<div id="t66" style="position:absolute;left:21.90px;top:468px;line-height:13px;font-size:12px;color:#000;font-weight:normal;white-space:nowrap;transform:scaleX(0.8970);transform-origin:0 0;">Durchschnitt</div>
<div id="t67" style="position:absolute;left:129.80px;top:468px;line-height:13px;font-size:12px;color:#000080;font-weight:normal;white-space:nowrap;transform:scaleX(0.8957);transform-origin:0 0;">0.59</div>
<div id="t68" style="position:absolute;left:21.94px;top:483px;line-height:13px;font-size:12px;color:#000;font-weight:normal;white-space:nowrap;transform:scaleX(0.8604);transform-origin:0 0;">Maximum:</div>
<div id="t69" style="position:absolute;left:144.50px;top:483px;line-height:13px;font-size:12px;color:#000080;font-weight:normal;white-space:nowrap;transform:scaleX(0.9167);transform-origin:0 0;">7</div>
<div id="t70" style="position:absolute;left:21.93px;top:498px;line-height:13px;font-size:12px;color:#000;font-weight:normal;white-space:nowrap;transform:scaleX(0.8721);transform-origin:0 0;">Gesamt:</div>
<div id="t71" style="position:absolute;left:119.57px;top:498px;line-height:13px;font-size:12px;color:#000080;font-weight:normal;white-space:nowrap;transform:scaleX(0.9344);transform-origin:0 0;">10600</div>
<div style="position:absolute;left:172px;top:457px;width:144px;height:55px;border:1px solid #808080;box-shadow:1px 1px 0 #ffffff, inset 1px 1px 0 #ffffff;"></div>
<div style="position:absolute;left:14px;top:514px;width:306px;height:1px;background:#d4d0c8;"></div>
<div style="position:absolute;left:179px;top:452px;width:65px;height:10px;background:#d4d0c8;"></div>
<div style="position:absolute;left:182px;top:454px;width:8px;height:8px;background:#000;"></div>
<div style="position:absolute;left:183px;top:455px;width:6px;height:6px;background:#ffff00;"></div>
<div id="t72" style="position:absolute;left:192.94px;top:452px;line-height:13px;font-size:12px;color:#000;font-weight:normal;white-space:nowrap;transform:scaleX(0.8571);transform-origin:0 0;">PI Failures</div>
<div id="t73" style="position:absolute;left:181.00px;top:468px;line-height:13px;font-size:12px;color:#000;font-weight:normal;white-space:nowrap;transform:scaleX(0.8970);transform-origin:0 0;">Durchschnitt</div>
<div id="t74" style="position:absolute;left:288.40px;top:468px;line-height:13px;font-size:12px;color:#000080;font-weight:normal;white-space:nowrap;transform:scaleX(0.8870);transform-origin:0 0;">0.00</div>
<div id="t75" style="position:absolute;left:181.04px;top:483px;line-height:13px;font-size:12px;color:#000;font-weight:normal;white-space:nowrap;transform:scaleX(0.8585);transform-origin:0 0;">Maximum:</div>
<div id="t76" style="position:absolute;left:303.30px;top:483px;line-height:13px;font-size:12px;color:#000080;font-weight:normal;white-space:nowrap;transform:scaleX(0.7000);transform-origin:0 0;">1</div>
<div id="t77" style="position:absolute;left:181.03px;top:498px;line-height:13px;font-size:12px;color:#000;font-weight:normal;white-space:nowrap;transform:scaleX(0.8721);transform-origin:0 0;">Gesamt:</div>
<div id="t78" style="position:absolute;left:297.60px;top:498px;line-height:13px;font-size:12px;color:#000080;font-weight:normal;white-space:nowrap;transform:scaleX(0.8615);transform-origin:0 0;">24</div>
<div style="position:absolute;left:331px;top:457px;width:145px;height:41px;border:1px solid #808080;box-shadow:1px 1px 0 #ffffff, inset 1px 1px 0 #ffffff;"></div>
<div style="position:absolute;left:338px;top:452px;width:37px;height:10px;background:#d4d0c8;"></div>
<div style="position:absolute;left:341px;top:454px;width:8px;height:8px;background:#000;"></div>
<div style="position:absolute;left:342px;top:455px;width:6px;height:6px;background:#ff00ff;"></div>
<div id="t79" style="position:absolute;left:351.60px;top:452px;line-height:13px;font-size:12px;color:#000;font-weight:normal;white-space:nowrap;transform:scaleX(0.8615);transform-origin:0 0;">Jitter</div>
<div id="t80" style="position:absolute;left:339.90px;top:468px;line-height:13px;font-size:12px;color:#000;font-weight:normal;white-space:nowrap;transform:scaleX(0.8970);transform-origin:0 0;">Durchschnitt</div>
<div id="t81" style="position:absolute;left:436.30px;top:468px;line-height:13px;font-size:12px;color:#000080;font-weight:normal;white-space:nowrap;transform:scaleX(0.8568);transform-origin:0 0;">8.75 %</div>
<div id="t82" style="position:absolute;left:339.94px;top:483px;line-height:13px;font-size:12px;color:#000;font-weight:normal;white-space:nowrap;transform:scaleX(0.8604);transform-origin:0 0;">Maximum:</div>
<div id="t83" style="position:absolute;left:441.70px;top:483px;line-height:13px;font-size:12px;color:#000080;font-weight:normal;white-space:nowrap;transform:scaleX(0.8767);transform-origin:0 0;">9.4 %</div>
<div id="t84" style="position:absolute;left:339.92px;top:502px;line-height:13px;font-size:12px;color:#000;font-weight:normal;white-space:nowrap;transform:scaleX(0.8812);transform-origin:0 0;">PO Ausfälle:</div>
<div id="t85" style="position:absolute;left:465.80px;top:502px;line-height:13px;font-size:12px;color:#000080;font-weight:normal;white-space:nowrap;transform:scaleX(0.5500);transform-origin:0 0;">-</div>
</body></html>
